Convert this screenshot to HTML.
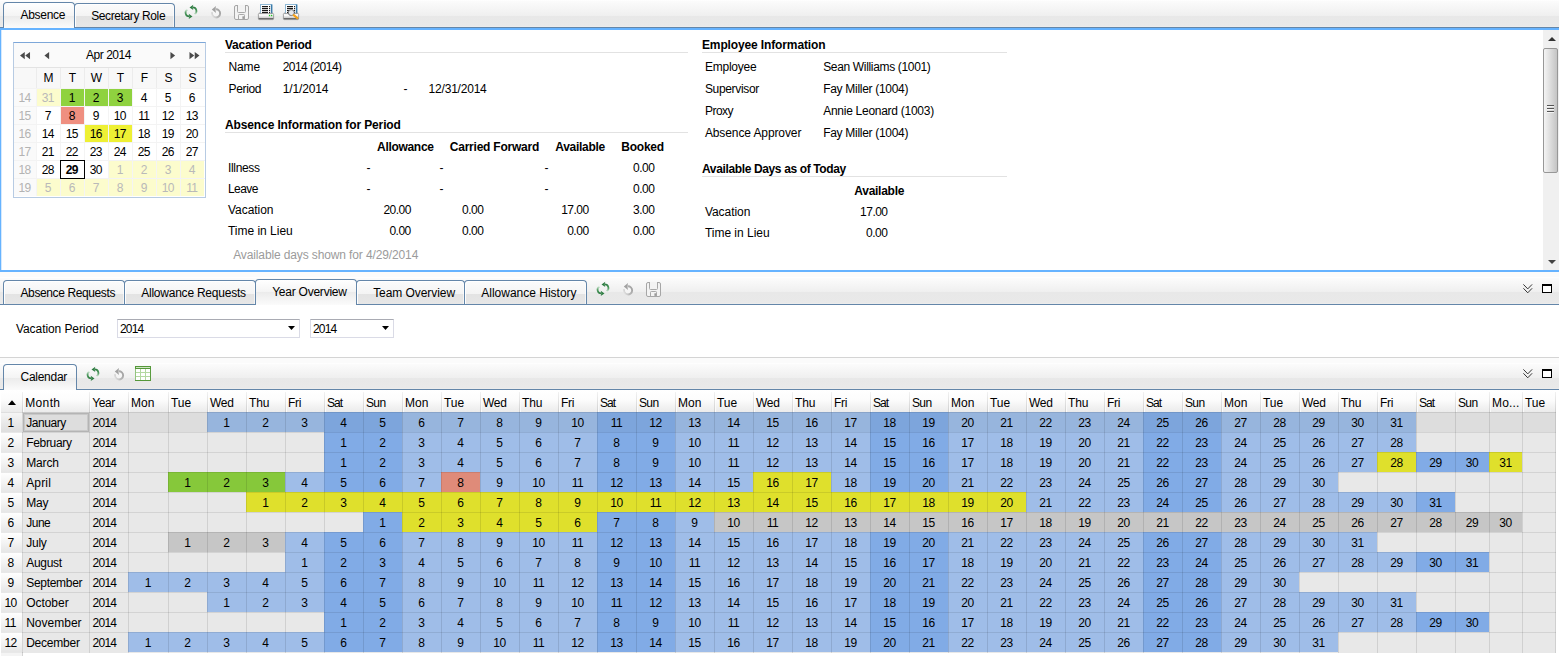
<!DOCTYPE html>
<html><head><meta charset="utf-8"><title>Absence</title>
<style>
html,body{margin:0;padding:0;}
body{width:1559px;height:656px;overflow:hidden;background:#fff;position:relative;font-family:"Liberation Sans",sans-serif;font-size:12px;color:#000;}
.b{position:absolute;box-sizing:content-box;}
.t{position:absolute;white-space:nowrap;line-height:14px;height:14px;}
svg{overflow:visible}
</style></head><body>

<div class="b" style="left:0px;top:-5px;width:1559px;height:32px;background:linear-gradient(to bottom,#fbfbfb 0,#fbfbfb 4.5px,#ffffff 5px,#fbfbfb 6.5px,#efefef 21px,#e8e8e8 21px,#e9e9e9 31px,#efefef 32px);"></div>
<div class="b" style="left:0px;top:27px;width:1559px;height:1px;background:#6486a9;"></div>
<div class="b" style="left:3px;top:2px;width:70px;height:25px;border:1px solid #6486a9;border-bottom:none;border-radius:4px 4px 0 0;background:linear-gradient(to bottom,#ffffff 0,#f4f4f4 13px,#ebebeb 13px,#fbfbfb 25px);z-index:2;"></div>
<span class="t" style="left:20.50px;top:8px;letter-spacing:-0.285px;z-index:3;">Absence</span>
<div class="b" style="left:74px;top:3px;width:99px;height:23px;border:1px solid #6486a9;border-bottom:none;border-radius:4px 4px 0 0;background:linear-gradient(to bottom,#fbfbfb 0,#f4f4f4 12px,#e3e3e3 12px,#e7e7e7 23px);box-shadow:inset 1px 1px 0 rgba(255,255,255,.95), inset -1px 0 0 rgba(255,255,255,.6);z-index:1;"></div>
<span class="t" style="left:91.20px;top:9px;letter-spacing:-0.383px;z-index:3;">Secretary Role</span>
<svg class="b" style="left:185px;top:5px" width="12" height="14" viewBox="0 0 12 14">
<defs><linearGradient id="ru1" x1="0" y1="2" x2="0" y2="9.5" gradientUnits="userSpaceOnUse"><stop offset="0" stop-color="#2f7d43"/><stop offset="0.55" stop-color="#4f9a5f"/><stop offset="1" stop-color="#d4ead8"/></linearGradient>
<linearGradient id="rl1" x1="0" y1="12" x2="0" y2="4.5" gradientUnits="userSpaceOnUse"><stop offset="0" stop-color="#2f7d43"/><stop offset="0.55" stop-color="#4f9a5f"/><stop offset="1" stop-color="#d4ead8"/></linearGradient></defs>
<path d="M7.6 2.4 A3.7 3.7 0 0 1 9.6 9.3" fill="none" stroke="url(#ru1)" stroke-width="1.7"/>
<path d="M4.5 2.4 L8.3 -0.2 L7.6 2.4 L8.3 5 Z" fill="#2f7d43"/>
<path d="M4.4 11.4 A3.7 3.7 0 0 1 2.4 4.5" fill="none" stroke="url(#rl1)" stroke-width="1.7"/>
<path d="M7.5 11.4 L3.7 8.8 L4.4 11.4 L3.7 14 Z" fill="#2f7d43"/>
</svg>
<svg class="b" style="left:211px;top:5.6px" width="11" height="13" viewBox="0 0 11 13">
<defs><linearGradient id="un2" x1="9.5" y1="5" x2="0.5" y2="9.5" gradientUnits="userSpaceOnUse"><stop offset="0" stop-color="#a0a0a0"/><stop offset="0.55" stop-color="#b8b8b8"/><stop offset="1" stop-color="#e4e4e4"/></linearGradient></defs>
<circle cx="5" cy="7.4" r="3.2" fill="#f6f6f6" opacity="0.8"/>
<path d="M4.6 3.3 A4.1 4.1 0 1 1 1.1 6.2" fill="none" stroke="url(#un2)" stroke-width="1.9"/>
<path d="M0.8 3.4 L5 0 L4.4 3.4 L5 7 Z" fill="#a2a2a2"/>
</svg>
<svg class="b" style="left:234px;top:5px" width="15" height="15" viewBox="0 0 15 15">
<rect x="0.5" y="0.5" width="14" height="14" rx="1.5" fill="#f3f3f3" stroke="#a6a6a6"/>
<rect x="4" y="0" width="7" height="1" fill="#f3f3f3"/>
<path d="M3.5 0.5 V6.5 Q3.5 7.5 4.5 7.5 H10.5 Q11.5 7.5 11.5 6.5 V0.5" fill="none" stroke="#a8a8a8"/>
<path d="M4.5 14.5 V10.3 Q4.5 9.5 5.3 9.5 H9.7 Q10.5 9.5 10.5 10.3 V14.5" fill="none" stroke="#a8a8a8"/>
<rect x="8.4" y="11.3" width="1.8" height="2.6" fill="#999"/>
</svg>
<svg class="b" style="left:258px;top:3.8px" width="16" height="16" viewBox="0 0 16 16">
<defs><linearGradient id="pb3" x1="0" y1="8.5" x2="0" y2="16" gradientUnits="userSpaceOnUse"><stop offset="0" stop-color="#d0d0d0"/><stop offset="0.22" stop-color="#ffffff"/><stop offset="0.5" stop-color="#f4f4f4"/><stop offset="0.62" stop-color="#bcbcbc"/><stop offset="0.69" stop-color="#e2e2e2"/><stop offset="0.75" stop-color="#6a6a6a"/><stop offset="1" stop-color="#707070"/></linearGradient></defs>
<rect x="2" y="0" width="12.3" height="10" fill="#8fb9d6"/>
<rect x="12.6" y="0.6" width="1.7" height="9.4" fill="#3b7aa8"/>
<rect x="3" y="1" width="9.8" height="9" fill="#ffffff"/>
<g fill="#000"><rect x="4" y="2.1" width="6" height="1.1"/><rect x="4" y="4.1" width="6" height="1.1"/><rect x="4" y="6.1" width="6" height="1.1"/><rect x="4" y="8.1" width="6" height="1.1"/>
<rect x="11" y="2.1" width="1.1" height="1.1"/><rect x="11" y="4.1" width="1.1" height="1.1"/><rect x="11" y="6.1" width="1.1" height="1.1"/><rect x="11" y="8.1" width="1.1" height="1.1"/></g>
<path d="M1.7 8.7 L0.4 10.2 V14.6 Q0.4 15.6 1.4 15.6 H14.6 Q15.6 15.6 15.6 14.6 V10.2 L14.3 8.7 L14.3 9.6 H1.7 Z" fill="url(#pb3)" stroke="#8e8e8e" stroke-width="0.8"/>
<rect x="10.9" y="10.8" width="1.3" height="1.4" fill="#25c425"/><rect x="13" y="10.8" width="1.3" height="1.4" fill="#25c425"/></svg>
<svg class="b" style="left:283px;top:3.8px" width="16" height="16" viewBox="0 0 16 16">
<defs><linearGradient id="pb4" x1="0" y1="8.5" x2="0" y2="16" gradientUnits="userSpaceOnUse"><stop offset="0" stop-color="#d0d0d0"/><stop offset="0.22" stop-color="#ffffff"/><stop offset="0.5" stop-color="#f4f4f4"/><stop offset="0.62" stop-color="#bcbcbc"/><stop offset="0.69" stop-color="#e2e2e2"/><stop offset="0.75" stop-color="#6a6a6a"/><stop offset="1" stop-color="#707070"/></linearGradient></defs>
<rect x="2" y="0" width="12.3" height="10" fill="#8fb9d6"/>
<rect x="12.6" y="0.6" width="1.7" height="9.4" fill="#3b7aa8"/>
<rect x="3" y="1" width="9.8" height="9" fill="#ffffff"/>
<g fill="#000"><rect x="4" y="2.1" width="6" height="1.1"/><rect x="4" y="4.1" width="6" height="1.1"/><rect x="4" y="6.1" width="6" height="1.1"/><rect x="4" y="8.1" width="6" height="1.1"/>
<rect x="11" y="2.1" width="1.1" height="1.1"/><rect x="11" y="4.1" width="1.1" height="1.1"/><rect x="11" y="6.1" width="1.1" height="1.1"/><rect x="11" y="8.1" width="1.1" height="1.1"/></g>
<path d="M1.7 8.7 L0.4 10.2 V14.6 Q0.4 15.6 1.4 15.6 H14.6 Q15.6 15.6 15.6 14.6 V10.2 L14.3 8.7 L14.3 9.6 H1.7 Z" fill="url(#pb4)" stroke="#8e8e8e" stroke-width="0.8"/>
<circle cx="8.3" cy="8.6" r="3" fill="#e6e9ec" stroke="#6a6a6a" stroke-width="0.9"/>
<path d="M10.8 11.2 L14.4 14.2" stroke="#f5a21a" stroke-width="2.2" stroke-linecap="round"/></svg>
<div class="b" style="left:0px;top:28px;width:1559px;height:2px;background:#66b3ff;"></div>
<div class="b" style="left:0px;top:28px;width:1px;height:243px;background:#66b3ff;"></div>
<div class="b" style="left:1px;top:30px;width:1px;height:240px;background:#d6e9fc;"></div>
<div class="b" style="left:0px;top:270px;width:1559px;height:2px;background:#66b3ff;"></div>
<div class="b" style="left:1543px;top:30px;width:16px;height:240px;background:#f0f0f0;"></div>
<svg class="b" style="left:1547.5px;top:37px" width="8" height="4" viewBox="0 0 8 4"><path d="M0 4 L4 0 L8 4 Z" fill="#333"/></svg>
<svg class="b" style="left:1547.5px;top:260px" width="8" height="4" viewBox="0 0 8 4"><path d="M0 0 L8 0 L4 4 Z" fill="#444"/></svg>
<div class="b" style="left:1543px;top:48px;width:13px;height:123px;border:1px solid #979797;border-radius:2px;background:linear-gradient(to right,#f4f4f4 0,#dcdcdc 50%,#c4c4c4 100%);"></div>
<div class="b" style="left:1547px;top:105px;width:7px;height:1px;background:#555;"></div>
<div class="b" style="left:1547px;top:106px;width:7px;height:1px;background:#fff;opacity:.7;"></div>
<div class="b" style="left:1547px;top:108px;width:7px;height:1px;background:#555;"></div>
<div class="b" style="left:1547px;top:109px;width:7px;height:1px;background:#fff;opacity:.7;"></div>
<div class="b" style="left:1547px;top:111px;width:7px;height:1px;background:#555;"></div>
<div class="b" style="left:1547px;top:112px;width:7px;height:1px;background:#fff;opacity:.7;"></div>
<div class="b" style="left:13px;top:42px;width:191px;height:154px;border:1px solid #b7cbe3;border-top-color:#7da7d9;background:#fff;"></div>
<div class="b" style="left:14px;top:43px;width:191px;height:24px;background:#fafafa;"></div>
<div class="b" style="left:14px;top:67px;width:191px;height:1px;background:#e3e3e3;"></div>
<div class="b" style="left:14px;top:68px;width:191px;height:20px;background:#f8f8f8;"></div>
<svg class="b" style="left:20px;top:51.6px" width="10.5" height="7.2" viewBox="0 0 11 8" preserveAspectRatio="none"><path d="M5 0 V8 L0 4 Z M10.5 0 V8 L5.5 4 Z" fill="#4a4a4a"/></svg>
<svg class="b" style="left:44px;top:51.6px" width="5.6" height="7.2" viewBox="0 0 6 8" preserveAspectRatio="none"><path d="M5.5 0 V8 L0.5 4 Z" fill="#4a4a4a"/></svg>
<svg class="b" style="left:170px;top:51.6px" width="5.6" height="7.2" viewBox="0 0 6 8" preserveAspectRatio="none"><path d="M0.5 0 V8 L5.5 4 Z" fill="#4a4a4a"/></svg>
<svg class="b" style="left:189px;top:51.6px" width="10.5" height="7.2" viewBox="0 0 11 8" preserveAspectRatio="none"><path d="M0.5 0 V8 L5.5 4 Z M6 0 V8 L11 4 Z" fill="#4a4a4a"/></svg>
<span class="t" style="left:86.00px;top:48px;letter-spacing:-0.463px;">Apr 2014</span>
<span class="t" style="left:43.50px;top:71px;letter-spacing:0.000px;">M</span>
<div class="b" style="left:36px;top:68px;width:1px;height:20px;background:#ececec;"></div>
<span class="t" style="left:68.84px;top:71px;letter-spacing:0.000px;">T</span>
<div class="b" style="left:60px;top:68px;width:1px;height:20px;background:#ececec;"></div>
<span class="t" style="left:90.84px;top:71px;letter-spacing:0.000px;">W</span>
<div class="b" style="left:84px;top:68px;width:1px;height:20px;background:#ececec;"></div>
<span class="t" style="left:116.84px;top:71px;letter-spacing:0.000px;">T</span>
<div class="b" style="left:108px;top:68px;width:1px;height:20px;background:#ececec;"></div>
<span class="t" style="left:140.84px;top:71px;letter-spacing:0.000px;">F</span>
<div class="b" style="left:132px;top:68px;width:1px;height:20px;background:#ececec;"></div>
<span class="t" style="left:164.50px;top:71px;letter-spacing:0.000px;">S</span>
<div class="b" style="left:156px;top:68px;width:1px;height:20px;background:#ececec;"></div>
<span class="t" style="left:188.50px;top:71px;letter-spacing:0.000px;">S</span>
<div class="b" style="left:180px;top:68px;width:1px;height:20px;background:#ececec;"></div>
<div class="b" style="left:14px;top:88px;width:191px;height:1px;background:#f3f3f3;"></div>
<div class="b" style="left:14px;top:89px;width:22px;height:17px;background:#fafafa;"></div>
<span class="t" style="left:18.53px;top:91px;letter-spacing:-0.600px;color:#b3b3b3;">14</span>
<div class="b" style="left:36px;top:89px;width:1px;height:17px;background:#f4f4f4;"></div>
<div class="b" style="left:37px;top:89px;width:23px;height:17px;background:#fcfccd;"></div>
<span class="t" style="left:41.73px;top:91px;letter-spacing:-0.600px;color:#b9b9b9;">31</span>
<div class="b" style="left:60px;top:89px;width:1px;height:17px;background:#f4f4f4;"></div>
<div class="b" style="left:61px;top:89px;width:23px;height:17px;background:#8fd23f;"></div>
<span class="t" style="left:68.76px;top:91px;letter-spacing:-0.600px;">1</span>
<div class="b" style="left:84px;top:89px;width:1px;height:17px;background:#f4f4f4;"></div>
<div class="b" style="left:85px;top:89px;width:23px;height:17px;background:#8fd23f;"></div>
<span class="t" style="left:92.76px;top:91px;letter-spacing:-0.600px;">2</span>
<div class="b" style="left:108px;top:89px;width:1px;height:17px;background:#f4f4f4;"></div>
<div class="b" style="left:109px;top:89px;width:23px;height:17px;background:#8fd23f;"></div>
<span class="t" style="left:116.76px;top:91px;letter-spacing:-0.600px;">3</span>
<div class="b" style="left:132px;top:89px;width:1px;height:17px;background:#f4f4f4;"></div>
<span class="t" style="left:140.76px;top:91px;letter-spacing:-0.600px;">4</span>
<div class="b" style="left:156px;top:89px;width:1px;height:17px;background:#f4f4f4;"></div>
<span class="t" style="left:164.76px;top:91px;letter-spacing:-0.600px;">5</span>
<div class="b" style="left:180px;top:89px;width:1px;height:17px;background:#f4f4f4;"></div>
<span class="t" style="left:188.76px;top:91px;letter-spacing:-0.600px;">6</span>
<div class="b" style="left:14px;top:106px;width:191px;height:1px;background:#f3f3f3;"></div>
<div class="b" style="left:14px;top:107px;width:22px;height:17px;background:#fafafa;"></div>
<span class="t" style="left:18.53px;top:109px;letter-spacing:-0.600px;color:#b3b3b3;">15</span>
<div class="b" style="left:36px;top:107px;width:1px;height:17px;background:#f4f4f4;"></div>
<span class="t" style="left:44.76px;top:109px;letter-spacing:-0.600px;">7</span>
<div class="b" style="left:60px;top:107px;width:1px;height:17px;background:#f4f4f4;"></div>
<div class="b" style="left:61px;top:107px;width:23px;height:17px;background:#ef8f80;"></div>
<span class="t" style="left:68.76px;top:109px;letter-spacing:-0.600px;">8</span>
<div class="b" style="left:84px;top:107px;width:1px;height:17px;background:#f4f4f4;"></div>
<span class="t" style="left:92.76px;top:109px;letter-spacing:-0.600px;">9</span>
<div class="b" style="left:108px;top:107px;width:1px;height:17px;background:#f4f4f4;"></div>
<span class="t" style="left:113.73px;top:109px;letter-spacing:-0.600px;">10</span>
<div class="b" style="left:132px;top:107px;width:1px;height:17px;background:#f4f4f4;"></div>
<span class="t" style="left:138.17px;top:109px;letter-spacing:-0.600px;">11</span>
<div class="b" style="left:156px;top:107px;width:1px;height:17px;background:#f4f4f4;"></div>
<span class="t" style="left:161.73px;top:109px;letter-spacing:-0.600px;">12</span>
<div class="b" style="left:180px;top:107px;width:1px;height:17px;background:#f4f4f4;"></div>
<span class="t" style="left:185.73px;top:109px;letter-spacing:-0.600px;">13</span>
<div class="b" style="left:14px;top:124px;width:191px;height:1px;background:#f3f3f3;"></div>
<div class="b" style="left:14px;top:125px;width:22px;height:17px;background:#fafafa;"></div>
<span class="t" style="left:18.53px;top:127px;letter-spacing:-0.600px;color:#b3b3b3;">16</span>
<div class="b" style="left:36px;top:125px;width:1px;height:17px;background:#f4f4f4;"></div>
<span class="t" style="left:41.73px;top:127px;letter-spacing:-0.600px;">14</span>
<div class="b" style="left:60px;top:125px;width:1px;height:17px;background:#f4f4f4;"></div>
<span class="t" style="left:65.73px;top:127px;letter-spacing:-0.600px;">15</span>
<div class="b" style="left:84px;top:125px;width:1px;height:17px;background:#f4f4f4;"></div>
<div class="b" style="left:85px;top:125px;width:23px;height:17px;background:#eef034;"></div>
<span class="t" style="left:89.73px;top:127px;letter-spacing:-0.600px;">16</span>
<div class="b" style="left:108px;top:125px;width:1px;height:17px;background:#f4f4f4;"></div>
<div class="b" style="left:109px;top:125px;width:23px;height:17px;background:#eef034;"></div>
<span class="t" style="left:113.73px;top:127px;letter-spacing:-0.600px;">17</span>
<div class="b" style="left:132px;top:125px;width:1px;height:17px;background:#f4f4f4;"></div>
<span class="t" style="left:137.73px;top:127px;letter-spacing:-0.600px;">18</span>
<div class="b" style="left:156px;top:125px;width:1px;height:17px;background:#f4f4f4;"></div>
<span class="t" style="left:161.73px;top:127px;letter-spacing:-0.600px;">19</span>
<div class="b" style="left:180px;top:125px;width:1px;height:17px;background:#f4f4f4;"></div>
<span class="t" style="left:185.73px;top:127px;letter-spacing:-0.600px;">20</span>
<div class="b" style="left:14px;top:142px;width:191px;height:1px;background:#f3f3f3;"></div>
<div class="b" style="left:14px;top:143px;width:22px;height:17px;background:#fafafa;"></div>
<span class="t" style="left:18.53px;top:145px;letter-spacing:-0.600px;color:#b3b3b3;">17</span>
<div class="b" style="left:36px;top:143px;width:1px;height:17px;background:#f4f4f4;"></div>
<span class="t" style="left:41.73px;top:145px;letter-spacing:-0.600px;">21</span>
<div class="b" style="left:60px;top:143px;width:1px;height:17px;background:#f4f4f4;"></div>
<span class="t" style="left:65.73px;top:145px;letter-spacing:-0.600px;">22</span>
<div class="b" style="left:84px;top:143px;width:1px;height:17px;background:#f4f4f4;"></div>
<span class="t" style="left:89.73px;top:145px;letter-spacing:-0.600px;">23</span>
<div class="b" style="left:108px;top:143px;width:1px;height:17px;background:#f4f4f4;"></div>
<span class="t" style="left:113.73px;top:145px;letter-spacing:-0.600px;">24</span>
<div class="b" style="left:132px;top:143px;width:1px;height:17px;background:#f4f4f4;"></div>
<span class="t" style="left:137.73px;top:145px;letter-spacing:-0.600px;">25</span>
<div class="b" style="left:156px;top:143px;width:1px;height:17px;background:#f4f4f4;"></div>
<span class="t" style="left:161.73px;top:145px;letter-spacing:-0.600px;">26</span>
<div class="b" style="left:180px;top:143px;width:1px;height:17px;background:#f4f4f4;"></div>
<span class="t" style="left:185.73px;top:145px;letter-spacing:-0.600px;">27</span>
<div class="b" style="left:14px;top:160px;width:191px;height:1px;background:#f3f3f3;"></div>
<div class="b" style="left:14px;top:161px;width:22px;height:17px;background:#fafafa;"></div>
<span class="t" style="left:18.53px;top:163px;letter-spacing:-0.600px;color:#b3b3b3;">18</span>
<div class="b" style="left:36px;top:161px;width:1px;height:17px;background:#f4f4f4;"></div>
<span class="t" style="left:41.73px;top:163px;letter-spacing:-0.600px;">28</span>
<div class="b" style="left:60px;top:161px;width:1px;height:17px;background:#f4f4f4;"></div>
<div class="b" style="left:60px;top:160px;width:23px;height:17px;border:1px solid #000;background:#fff;z-index:4;"></div>
<span class="t" style="left:65.73px;top:163px;letter-spacing:-0.600px;font-weight:bold;z-index:5;">29</span>
<div class="b" style="left:84px;top:161px;width:1px;height:17px;background:#f4f4f4;"></div>
<span class="t" style="left:89.73px;top:163px;letter-spacing:-0.600px;">30</span>
<div class="b" style="left:108px;top:161px;width:1px;height:17px;background:#f4f4f4;"></div>
<div class="b" style="left:109px;top:161px;width:23px;height:17px;background:#fcfccd;"></div>
<span class="t" style="left:116.76px;top:163px;letter-spacing:-0.600px;color:#b9b9b9;">1</span>
<div class="b" style="left:132px;top:161px;width:1px;height:17px;background:#f4f4f4;"></div>
<div class="b" style="left:133px;top:161px;width:23px;height:17px;background:#fcfccd;"></div>
<span class="t" style="left:140.76px;top:163px;letter-spacing:-0.600px;color:#b9b9b9;">2</span>
<div class="b" style="left:156px;top:161px;width:1px;height:17px;background:#f4f4f4;"></div>
<div class="b" style="left:157px;top:161px;width:23px;height:17px;background:#fcfccd;"></div>
<span class="t" style="left:164.76px;top:163px;letter-spacing:-0.600px;color:#b9b9b9;">3</span>
<div class="b" style="left:180px;top:161px;width:1px;height:17px;background:#f4f4f4;"></div>
<div class="b" style="left:181px;top:161px;width:23px;height:17px;background:#fcfccd;"></div>
<span class="t" style="left:188.76px;top:163px;letter-spacing:-0.600px;color:#b9b9b9;">4</span>
<div class="b" style="left:14px;top:178px;width:191px;height:1px;background:#f3f3f3;"></div>
<div class="b" style="left:14px;top:179px;width:22px;height:17px;background:#fafafa;"></div>
<span class="t" style="left:18.53px;top:181px;letter-spacing:-0.600px;color:#b3b3b3;">19</span>
<div class="b" style="left:36px;top:179px;width:1px;height:17px;background:#f4f4f4;"></div>
<div class="b" style="left:37px;top:179px;width:23px;height:17px;background:#fcfccd;"></div>
<span class="t" style="left:44.76px;top:181px;letter-spacing:-0.600px;color:#b9b9b9;">5</span>
<div class="b" style="left:60px;top:179px;width:1px;height:17px;background:#f4f4f4;"></div>
<div class="b" style="left:61px;top:179px;width:23px;height:17px;background:#fcfccd;"></div>
<span class="t" style="left:68.76px;top:181px;letter-spacing:-0.600px;color:#b9b9b9;">6</span>
<div class="b" style="left:84px;top:179px;width:1px;height:17px;background:#f4f4f4;"></div>
<div class="b" style="left:85px;top:179px;width:23px;height:17px;background:#fcfccd;"></div>
<span class="t" style="left:92.76px;top:181px;letter-spacing:-0.600px;color:#b9b9b9;">7</span>
<div class="b" style="left:108px;top:179px;width:1px;height:17px;background:#f4f4f4;"></div>
<div class="b" style="left:109px;top:179px;width:23px;height:17px;background:#fcfccd;"></div>
<span class="t" style="left:116.76px;top:181px;letter-spacing:-0.600px;color:#b9b9b9;">8</span>
<div class="b" style="left:132px;top:179px;width:1px;height:17px;background:#f4f4f4;"></div>
<div class="b" style="left:133px;top:179px;width:23px;height:17px;background:#fcfccd;"></div>
<span class="t" style="left:140.76px;top:181px;letter-spacing:-0.600px;color:#b9b9b9;">9</span>
<div class="b" style="left:156px;top:179px;width:1px;height:17px;background:#f4f4f4;"></div>
<div class="b" style="left:157px;top:179px;width:23px;height:17px;background:#fcfccd;"></div>
<span class="t" style="left:161.73px;top:181px;letter-spacing:-0.600px;color:#b9b9b9;">10</span>
<div class="b" style="left:180px;top:179px;width:1px;height:17px;background:#f4f4f4;"></div>
<div class="b" style="left:181px;top:179px;width:23px;height:17px;background:#fcfccd;"></div>
<span class="t" style="left:186.17px;top:181px;letter-spacing:-0.600px;color:#b9b9b9;">11</span>
<span class="t" style="left:225.00px;top:38px;letter-spacing:-0.222px;font-weight:bold;">Vacation Period</span>
<div class="b" style="left:225px;top:52px;width:463px;height:1px;background:#e2e2e2;"></div>
<span class="t" style="left:228.50px;top:60px;letter-spacing:-0.152px;">Name</span>
<span class="t" style="left:282.70px;top:60px;letter-spacing:-0.538px;">2014 (2014)</span>
<span class="t" style="left:228.50px;top:82px;letter-spacing:-0.348px;">Period</span>
<span class="t" style="left:282.70px;top:82px;letter-spacing:-0.126px;">1/1/2014</span>
<span class="t" style="left:403.50px;top:82px;letter-spacing:0.000px;">-</span>
<span class="t" style="left:428.60px;top:82px;letter-spacing:-0.206px;">12/31/2014</span>
<span class="t" style="left:225.00px;top:118px;letter-spacing:-0.119px;font-weight:bold;">Absence Information for Period</span>
<div class="b" style="left:225px;top:132px;width:463px;height:1px;background:#e2e2e2;"></div>
<span class="t" style="left:377.10px;top:140px;letter-spacing:-0.316px;font-weight:bold;">Allowance</span>
<span class="t" style="left:449.80px;top:140px;letter-spacing:-0.233px;font-weight:bold;">Carried Forward</span>
<span class="t" style="left:555.30px;top:140px;letter-spacing:-0.294px;font-weight:bold;">Available</span>
<span class="t" style="left:621.30px;top:140px;letter-spacing:-0.234px;font-weight:bold;">Booked</span>
<span class="t" style="left:228.00px;top:161px;letter-spacing:-0.330px;">Illness</span>
<span class="t" style="left:366.60px;top:161px;letter-spacing:0.000px;">-</span>
<span class="t" style="left:439.50px;top:161px;letter-spacing:0.000px;">-</span>
<span class="t" style="left:544.60px;top:161px;letter-spacing:0.000px;">-</span>
<span class="t" style="left:633.00px;top:161px;letter-spacing:-0.489px;">0.00</span>
<span class="t" style="left:228.00px;top:182px;letter-spacing:-0.599px;">Leave</span>
<span class="t" style="left:366.60px;top:182px;letter-spacing:0.000px;">-</span>
<span class="t" style="left:439.50px;top:182px;letter-spacing:0.000px;">-</span>
<span class="t" style="left:544.60px;top:182px;letter-spacing:0.000px;">-</span>
<span class="t" style="left:633.00px;top:182px;letter-spacing:-0.489px;">0.00</span>
<span class="t" style="left:228.00px;top:203px;letter-spacing:-0.038px;">Vacation</span>
<span class="t" style="left:383.40px;top:203px;letter-spacing:-0.526px;">20.00</span>
<span class="t" style="left:462.10px;top:203px;letter-spacing:-0.489px;">0.00</span>
<span class="t" style="left:561.20px;top:203px;letter-spacing:-0.526px;">17.00</span>
<span class="t" style="left:633.00px;top:203px;letter-spacing:-0.489px;">3.00</span>
<span class="t" style="left:228.00px;top:224px;letter-spacing:-0.018px;">Time in Lieu</span>
<span class="t" style="left:389.40px;top:224px;letter-spacing:-0.489px;">0.00</span>
<span class="t" style="left:462.10px;top:224px;letter-spacing:-0.489px;">0.00</span>
<span class="t" style="left:567.20px;top:224px;letter-spacing:-0.489px;">0.00</span>
<span class="t" style="left:633.00px;top:224px;letter-spacing:-0.489px;">0.00</span>
<span class="t" style="left:233.20px;top:248px;letter-spacing:-0.125px;color:#9b9b9b;">Available days shown for 4/29/2014</span>
<span class="t" style="left:702.00px;top:38px;letter-spacing:-0.131px;font-weight:bold;">Employee Information</span>
<div class="b" style="left:702px;top:52px;width:305px;height:1px;background:#e2e2e2;"></div>
<span class="t" style="left:704.90px;top:60px;letter-spacing:-0.220px;">Employee</span>
<span class="t" style="left:823.20px;top:60px;letter-spacing:-0.337px;">Sean Williams (1001)</span>
<span class="t" style="left:704.90px;top:82px;letter-spacing:-0.326px;">Supervisor</span>
<span class="t" style="left:823.20px;top:82px;letter-spacing:-0.295px;">Fay Miller (1004)</span>
<span class="t" style="left:704.90px;top:104px;letter-spacing:-0.495px;">Proxy</span>
<span class="t" style="left:823.20px;top:104px;letter-spacing:-0.269px;">Annie Leonard (1003)</span>
<span class="t" style="left:704.90px;top:126px;letter-spacing:-0.104px;">Absence Approver</span>
<span class="t" style="left:823.20px;top:126px;letter-spacing:-0.295px;">Fay Miller (1004)</span>
<span class="t" style="left:702.00px;top:162px;letter-spacing:-0.365px;font-weight:bold;">Available Days as of Today</span>
<div class="b" style="left:702px;top:176px;width:305px;height:1px;background:#e2e2e2;"></div>
<span class="t" style="left:854.30px;top:184px;letter-spacing:-0.272px;font-weight:bold;">Available</span>
<span class="t" style="left:704.90px;top:205px;letter-spacing:-0.038px;">Vacation</span>
<span class="t" style="left:860.10px;top:205px;letter-spacing:-0.526px;">17.00</span>
<span class="t" style="left:704.90px;top:226px;letter-spacing:-0.018px;">Time in Lieu</span>
<span class="t" style="left:866.10px;top:226px;letter-spacing:-0.489px;">0.00</span>
<div class="b" style="left:0px;top:272px;width:1559px;height:32px;background:linear-gradient(to bottom,#fbfbfb 0,#fbfbfb 4.5px,#ffffff 5px,#fbfbfb 6.5px,#efefef 20px,#e8e8e8 20px,#e9e9e9 31px,#efefef 32px);"></div>
<div class="b" style="left:0px;top:304px;width:1559px;height:1px;background:#6486a9;"></div>
<div class="b" style="left:3px;top:280px;width:120px;height:23px;border:1px solid #6486a9;border-bottom:none;border-radius:4px 4px 0 0;background:linear-gradient(to bottom,#fbfbfb 0,#f4f4f4 13px,#e3e3e3 13px,#e7e7e7 23px);box-shadow:inset 1px 1px 0 rgba(255,255,255,.95), inset -1px 0 0 rgba(255,255,255,.6);z-index:1;"></div>
<span class="t" style="left:20.50px;top:286px;letter-spacing:-0.389px;z-index:3;">Absence Requests</span>
<div class="b" style="left:124px;top:280px;width:130px;height:23px;border:1px solid #6486a9;border-bottom:none;border-radius:4px 4px 0 0;background:linear-gradient(to bottom,#fbfbfb 0,#f4f4f4 13px,#e3e3e3 13px,#e7e7e7 23px);box-shadow:inset 1px 1px 0 rgba(255,255,255,.95), inset -1px 0 0 rgba(255,255,255,.6);z-index:1;"></div>
<span class="t" style="left:141.20px;top:286px;letter-spacing:-0.229px;z-index:3;">Allowance Requests</span>
<div class="b" style="left:255px;top:279px;width:100px;height:25px;border:1px solid #6486a9;border-bottom:none;border-radius:4px 4px 0 0;background:linear-gradient(to bottom,#ffffff 0,#f4f4f4 12px,#ebebeb 12px,#fbfbfb 25px);z-index:2;"></div>
<span class="t" style="left:272.20px;top:285px;letter-spacing:-0.238px;z-index:3;">Year Overview</span>
<div class="b" style="left:356px;top:280px;width:107px;height:23px;border:1px solid #6486a9;border-bottom:none;border-radius:4px 4px 0 0;background:linear-gradient(to bottom,#fbfbfb 0,#f4f4f4 13px,#e3e3e3 13px,#e7e7e7 23px);box-shadow:inset 1px 1px 0 rgba(255,255,255,.95), inset -1px 0 0 rgba(255,255,255,.6);z-index:1;"></div>
<span class="t" style="left:373.20px;top:286px;letter-spacing:-0.068px;z-index:3;">Team Overview</span>
<div class="b" style="left:464px;top:280px;width:121px;height:23px;border:1px solid #6486a9;border-bottom:none;border-radius:4px 4px 0 0;background:linear-gradient(to bottom,#fbfbfb 0,#f4f4f4 13px,#e3e3e3 13px,#e7e7e7 23px);box-shadow:inset 1px 1px 0 rgba(255,255,255,.95), inset -1px 0 0 rgba(255,255,255,.6);z-index:1;"></div>
<span class="t" style="left:481.30px;top:286px;letter-spacing:-0.004px;z-index:3;">Allowance History</span>
<svg class="b" style="left:597px;top:282px" width="12" height="14" viewBox="0 0 12 14">
<defs><linearGradient id="ru5" x1="0" y1="2" x2="0" y2="9.5" gradientUnits="userSpaceOnUse"><stop offset="0" stop-color="#2f7d43"/><stop offset="0.55" stop-color="#4f9a5f"/><stop offset="1" stop-color="#d4ead8"/></linearGradient>
<linearGradient id="rl5" x1="0" y1="12" x2="0" y2="4.5" gradientUnits="userSpaceOnUse"><stop offset="0" stop-color="#2f7d43"/><stop offset="0.55" stop-color="#4f9a5f"/><stop offset="1" stop-color="#d4ead8"/></linearGradient></defs>
<path d="M7.6 2.4 A3.7 3.7 0 0 1 9.6 9.3" fill="none" stroke="url(#ru5)" stroke-width="1.7"/>
<path d="M4.5 2.4 L8.3 -0.2 L7.6 2.4 L8.3 5 Z" fill="#2f7d43"/>
<path d="M4.4 11.4 A3.7 3.7 0 0 1 2.4 4.5" fill="none" stroke="url(#rl5)" stroke-width="1.7"/>
<path d="M7.5 11.4 L3.7 8.8 L4.4 11.4 L3.7 14 Z" fill="#2f7d43"/>
</svg>
<svg class="b" style="left:623px;top:282.6px" width="11" height="13" viewBox="0 0 11 13">
<defs><linearGradient id="un6" x1="9.5" y1="5" x2="0.5" y2="9.5" gradientUnits="userSpaceOnUse"><stop offset="0" stop-color="#a0a0a0"/><stop offset="0.55" stop-color="#b8b8b8"/><stop offset="1" stop-color="#e4e4e4"/></linearGradient></defs>
<circle cx="5" cy="7.4" r="3.2" fill="#f6f6f6" opacity="0.8"/>
<path d="M4.6 3.3 A4.1 4.1 0 1 1 1.1 6.2" fill="none" stroke="url(#un6)" stroke-width="1.9"/>
<path d="M0.8 3.4 L5 0 L4.4 3.4 L5 7 Z" fill="#a2a2a2"/>
</svg>
<svg class="b" style="left:646px;top:282px" width="15" height="15" viewBox="0 0 15 15">
<rect x="0.5" y="0.5" width="14" height="14" rx="1.5" fill="#f3f3f3" stroke="#a6a6a6"/>
<rect x="4" y="0" width="7" height="1" fill="#f3f3f3"/>
<path d="M3.5 0.5 V6.5 Q3.5 7.5 4.5 7.5 H10.5 Q11.5 7.5 11.5 6.5 V0.5" fill="none" stroke="#a8a8a8"/>
<path d="M4.5 14.5 V10.3 Q4.5 9.5 5.3 9.5 H9.7 Q10.5 9.5 10.5 10.3 V14.5" fill="none" stroke="#a8a8a8"/>
<rect x="8.4" y="11.3" width="1.8" height="2.6" fill="#999"/>
</svg>
<svg class="b" style="left:1523px;top:284px" width="10" height="10" viewBox="0 0 10 10">
<path d="M0.4 0.4 L4.75 4.9 L9.1 0.4 M0.4 4.3 L4.75 8.8 L9.1 4.3" fill="none" stroke="#2a2a2a" stroke-width="0.95"/></svg>
<div class="b" style="left:1542px;top:284px;width:8px;height:6px;border:1px solid #000;border-top-width:2px;background:#fff"></div>
<span class="t" style="left:16.00px;top:322px;letter-spacing:-0.082px;">Vacation Period</span>
<div class="b" style="left:117px;top:319px;width:181px;height:17px;border:1px solid #dadbe6;border-top-color:#a9abb3;background:#fff;"></div>
<span class="t" style="left:120.00px;top:322px;letter-spacing:-0.848px;">2014</span>
<svg class="b" style="left:288px;top:326px" width="7" height="4" viewBox="0 0 7 4"><path d="M0 0 H7 L3.5 4 Z" fill="#000"/></svg>
<div class="b" style="left:310px;top:319px;width:82px;height:17px;border:1px solid #dadbe6;border-top-color:#a9abb3;background:#fff;"></div>
<span class="t" style="left:313.00px;top:322px;letter-spacing:-0.848px;">2014</span>
<svg class="b" style="left:382px;top:326px" width="7" height="4" viewBox="0 0 7 4"><path d="M0 0 H7 L3.5 4 Z" fill="#000"/></svg>
<div class="b" style="left:0px;top:357px;width:1559px;height:1px;background:#d4d4d4;"></div>
<div class="b" style="left:0px;top:358px;width:1559px;height:31px;background:linear-gradient(to bottom,#fbfbfb 0,#fbfbfb 4.5px,#ffffff 5px,#fbfbfb 6.5px,#efefef 20px,#e8e8e8 20px,#e9e9e9 30px,#efefef 31px);"></div>
<div class="b" style="left:0px;top:389px;width:1559px;height:1px;background:#6486a9;"></div>
<div class="b" style="left:3px;top:364px;width:72px;height:25px;border:1px solid #6486a9;border-bottom:none;border-radius:4px 4px 0 0;background:linear-gradient(to bottom,#ffffff 0,#f4f4f4 13px,#ebebeb 13px,#fbfbfb 25px);z-index:2;"></div>
<span class="t" style="left:20.50px;top:370px;letter-spacing:-0.274px;z-index:3;">Calendar</span>
<svg class="b" style="left:87px;top:367px" width="12" height="14" viewBox="0 0 12 14">
<defs><linearGradient id="ru7" x1="0" y1="2" x2="0" y2="9.5" gradientUnits="userSpaceOnUse"><stop offset="0" stop-color="#2f7d43"/><stop offset="0.55" stop-color="#4f9a5f"/><stop offset="1" stop-color="#d4ead8"/></linearGradient>
<linearGradient id="rl7" x1="0" y1="12" x2="0" y2="4.5" gradientUnits="userSpaceOnUse"><stop offset="0" stop-color="#2f7d43"/><stop offset="0.55" stop-color="#4f9a5f"/><stop offset="1" stop-color="#d4ead8"/></linearGradient></defs>
<path d="M7.6 2.4 A3.7 3.7 0 0 1 9.6 9.3" fill="none" stroke="url(#ru7)" stroke-width="1.7"/>
<path d="M4.5 2.4 L8.3 -0.2 L7.6 2.4 L8.3 5 Z" fill="#2f7d43"/>
<path d="M4.4 11.4 A3.7 3.7 0 0 1 2.4 4.5" fill="none" stroke="url(#rl7)" stroke-width="1.7"/>
<path d="M7.5 11.4 L3.7 8.8 L4.4 11.4 L3.7 14 Z" fill="#2f7d43"/>
</svg>
<svg class="b" style="left:113.5px;top:367.6px" width="11" height="13" viewBox="0 0 11 13">
<defs><linearGradient id="un8" x1="9.5" y1="5" x2="0.5" y2="9.5" gradientUnits="userSpaceOnUse"><stop offset="0" stop-color="#a0a0a0"/><stop offset="0.55" stop-color="#b8b8b8"/><stop offset="1" stop-color="#e4e4e4"/></linearGradient></defs>
<circle cx="5" cy="7.4" r="3.2" fill="#f6f6f6" opacity="0.8"/>
<path d="M4.6 3.3 A4.1 4.1 0 1 1 1.1 6.2" fill="none" stroke="url(#un8)" stroke-width="1.9"/>
<path d="M0.8 3.4 L5 0 L4.4 3.4 L5 7 Z" fill="#a2a2a2"/>
</svg>
<svg class="b" style="left:135px;top:366px" width="16" height="15" viewBox="0 0 16 15" shape-rendering="crispEdges">
<rect x="0" y="0" width="16" height="15" fill="#b4d8a2"/>
<rect x="0" y="0" width="16" height="3" fill="#55983a"/>
<rect x="1" y="1" width="14" height="1" fill="#cfe6c4"/>
<rect x="0" y="3" width="1" height="11" fill="#93c47f"/>
<rect x="15" y="3" width="1" height="12" fill="#5a9c40"/>
<rect x="0" y="14" width="16" height="1" fill="#55983a"/>
<rect x="1" y="3" width="4" height="3" fill="#fff"/><rect x="1" y="7" width="4" height="3" fill="#fff"/><rect x="1" y="11" width="4" height="3" fill="#fff"/><rect x="6" y="3" width="4" height="3" fill="#fff"/><rect x="6" y="7" width="4" height="3" fill="#fff"/><rect x="6" y="11" width="4" height="3" fill="#fff"/><rect x="11" y="3" width="4" height="3" fill="#fff"/><rect x="11" y="7" width="4" height="3" fill="#fff"/><rect x="11" y="11" width="4" height="3" fill="#fff"/>
</svg>
<svg class="b" style="left:1523px;top:369px" width="10" height="10" viewBox="0 0 10 10">
<path d="M0.4 0.4 L4.75 4.9 L9.1 0.4 M0.4 4.3 L4.75 8.8 L9.1 4.3" fill="none" stroke="#2a2a2a" stroke-width="0.95"/></svg>
<div class="b" style="left:1542px;top:369px;width:8px;height:6px;border:1px solid #000;border-top-width:2px;background:#fff"></div>
<div class="b" style="left:1px;top:390px;width:1555px;height:22px;background:linear-gradient(to bottom,#ffffff 0,#fcfcfc 45%,#ebebeb 100%);"></div>
<svg class="b" style="left:8px;top:400px" width="8" height="5" viewBox="0 0 8 5"><path d="M0 5 L4 0.3 L8 5 Z" fill="#000"/></svg>
<span class="t" style="left:25.20px;top:396px;letter-spacing:0.370px;">Month</span>
<span class="t" style="left:92.20px;top:396px;letter-spacing:-0.362px;">Year</span>
<span class="t" style="left:131.00px;top:396px;letter-spacing:-0.015px;">Mon</span>
<span class="t" style="left:171.00px;top:396px;letter-spacing:-0.077px;">Tue</span>
<span class="t" style="left:210.00px;top:396px;letter-spacing:-0.285px;">Wed</span>
<span class="t" style="left:249.00px;top:396px;letter-spacing:-0.159px;">Thu</span>
<span class="t" style="left:288.00px;top:396px;letter-spacing:-0.331px;">Fri</span>
<span class="t" style="left:327.00px;top:396px;letter-spacing:-1.004px;">Sat</span>
<span class="t" style="left:366.00px;top:396px;letter-spacing:-0.651px;">Sun</span>
<span class="t" style="left:405.00px;top:396px;letter-spacing:-0.015px;">Mon</span>
<span class="t" style="left:444.00px;top:396px;letter-spacing:-0.077px;">Tue</span>
<span class="t" style="left:483.00px;top:396px;letter-spacing:-0.285px;">Wed</span>
<span class="t" style="left:522.00px;top:396px;letter-spacing:-0.159px;">Thu</span>
<span class="t" style="left:561.00px;top:396px;letter-spacing:-0.331px;">Fri</span>
<span class="t" style="left:600.00px;top:396px;letter-spacing:-1.004px;">Sat</span>
<span class="t" style="left:639.00px;top:396px;letter-spacing:-0.651px;">Sun</span>
<span class="t" style="left:678.00px;top:396px;letter-spacing:-0.015px;">Mon</span>
<span class="t" style="left:717.00px;top:396px;letter-spacing:-0.077px;">Tue</span>
<span class="t" style="left:756.00px;top:396px;letter-spacing:-0.285px;">Wed</span>
<span class="t" style="left:795.00px;top:396px;letter-spacing:-0.159px;">Thu</span>
<span class="t" style="left:834.00px;top:396px;letter-spacing:-0.331px;">Fri</span>
<span class="t" style="left:873.00px;top:396px;letter-spacing:-1.004px;">Sat</span>
<span class="t" style="left:912.00px;top:396px;letter-spacing:-0.651px;">Sun</span>
<span class="t" style="left:951.00px;top:396px;letter-spacing:-0.015px;">Mon</span>
<span class="t" style="left:990.00px;top:396px;letter-spacing:-0.077px;">Tue</span>
<span class="t" style="left:1029.00px;top:396px;letter-spacing:-0.285px;">Wed</span>
<span class="t" style="left:1068.00px;top:396px;letter-spacing:-0.159px;">Thu</span>
<span class="t" style="left:1107.00px;top:396px;letter-spacing:-0.331px;">Fri</span>
<span class="t" style="left:1146.00px;top:396px;letter-spacing:-1.004px;">Sat</span>
<span class="t" style="left:1185.00px;top:396px;letter-spacing:-0.651px;">Sun</span>
<span class="t" style="left:1224.00px;top:396px;letter-spacing:-0.015px;">Mon</span>
<span class="t" style="left:1263.00px;top:396px;letter-spacing:-0.077px;">Tue</span>
<span class="t" style="left:1302.00px;top:396px;letter-spacing:-0.285px;">Wed</span>
<span class="t" style="left:1341.00px;top:396px;letter-spacing:-0.159px;">Thu</span>
<span class="t" style="left:1380.00px;top:396px;letter-spacing:-0.331px;">Fri</span>
<span class="t" style="left:1419.00px;top:396px;letter-spacing:-1.004px;">Sat</span>
<span class="t" style="left:1458.00px;top:396px;letter-spacing:-0.651px;">Sun</span>
<span class="t" style="left:1492.00px;top:396px;letter-spacing:0.145px;">Mo...</span>
<span class="t" style="left:1525.00px;top:396px;letter-spacing:-0.077px;">Tue</span>
<div class="b" style="left:22px;top:392px;width:1px;height:20px;background:linear-gradient(to bottom,#f2f2f2,#cfcfcf);"></div>
<div class="b" style="left:23px;top:392px;width:1px;height:20px;background:linear-gradient(to bottom,rgba(255,255,255,0),rgba(255,255,255,.8));"></div>
<div class="b" style="left:89px;top:392px;width:1px;height:20px;background:linear-gradient(to bottom,#f2f2f2,#cfcfcf);"></div>
<div class="b" style="left:90px;top:392px;width:1px;height:20px;background:linear-gradient(to bottom,rgba(255,255,255,0),rgba(255,255,255,.8));"></div>
<div class="b" style="left:128px;top:392px;width:1px;height:20px;background:linear-gradient(to bottom,#f2f2f2,#cfcfcf);"></div>
<div class="b" style="left:129px;top:392px;width:1px;height:20px;background:linear-gradient(to bottom,rgba(255,255,255,0),rgba(255,255,255,.8));"></div>
<div class="b" style="left:168px;top:392px;width:1px;height:20px;background:linear-gradient(to bottom,#f2f2f2,#cfcfcf);"></div>
<div class="b" style="left:169px;top:392px;width:1px;height:20px;background:linear-gradient(to bottom,rgba(255,255,255,0),rgba(255,255,255,.8));"></div>
<div class="b" style="left:207px;top:392px;width:1px;height:20px;background:linear-gradient(to bottom,#f2f2f2,#cfcfcf);"></div>
<div class="b" style="left:208px;top:392px;width:1px;height:20px;background:linear-gradient(to bottom,rgba(255,255,255,0),rgba(255,255,255,.8));"></div>
<div class="b" style="left:246px;top:392px;width:1px;height:20px;background:linear-gradient(to bottom,#f2f2f2,#cfcfcf);"></div>
<div class="b" style="left:247px;top:392px;width:1px;height:20px;background:linear-gradient(to bottom,rgba(255,255,255,0),rgba(255,255,255,.8));"></div>
<div class="b" style="left:285px;top:392px;width:1px;height:20px;background:linear-gradient(to bottom,#f2f2f2,#cfcfcf);"></div>
<div class="b" style="left:286px;top:392px;width:1px;height:20px;background:linear-gradient(to bottom,rgba(255,255,255,0),rgba(255,255,255,.8));"></div>
<div class="b" style="left:324px;top:392px;width:1px;height:20px;background:linear-gradient(to bottom,#f2f2f2,#cfcfcf);"></div>
<div class="b" style="left:325px;top:392px;width:1px;height:20px;background:linear-gradient(to bottom,rgba(255,255,255,0),rgba(255,255,255,.8));"></div>
<div class="b" style="left:363px;top:392px;width:1px;height:20px;background:linear-gradient(to bottom,#f2f2f2,#cfcfcf);"></div>
<div class="b" style="left:364px;top:392px;width:1px;height:20px;background:linear-gradient(to bottom,rgba(255,255,255,0),rgba(255,255,255,.8));"></div>
<div class="b" style="left:402px;top:392px;width:1px;height:20px;background:linear-gradient(to bottom,#f2f2f2,#cfcfcf);"></div>
<div class="b" style="left:403px;top:392px;width:1px;height:20px;background:linear-gradient(to bottom,rgba(255,255,255,0),rgba(255,255,255,.8));"></div>
<div class="b" style="left:441px;top:392px;width:1px;height:20px;background:linear-gradient(to bottom,#f2f2f2,#cfcfcf);"></div>
<div class="b" style="left:442px;top:392px;width:1px;height:20px;background:linear-gradient(to bottom,rgba(255,255,255,0),rgba(255,255,255,.8));"></div>
<div class="b" style="left:480px;top:392px;width:1px;height:20px;background:linear-gradient(to bottom,#f2f2f2,#cfcfcf);"></div>
<div class="b" style="left:481px;top:392px;width:1px;height:20px;background:linear-gradient(to bottom,rgba(255,255,255,0),rgba(255,255,255,.8));"></div>
<div class="b" style="left:519px;top:392px;width:1px;height:20px;background:linear-gradient(to bottom,#f2f2f2,#cfcfcf);"></div>
<div class="b" style="left:520px;top:392px;width:1px;height:20px;background:linear-gradient(to bottom,rgba(255,255,255,0),rgba(255,255,255,.8));"></div>
<div class="b" style="left:558px;top:392px;width:1px;height:20px;background:linear-gradient(to bottom,#f2f2f2,#cfcfcf);"></div>
<div class="b" style="left:559px;top:392px;width:1px;height:20px;background:linear-gradient(to bottom,rgba(255,255,255,0),rgba(255,255,255,.8));"></div>
<div class="b" style="left:597px;top:392px;width:1px;height:20px;background:linear-gradient(to bottom,#f2f2f2,#cfcfcf);"></div>
<div class="b" style="left:598px;top:392px;width:1px;height:20px;background:linear-gradient(to bottom,rgba(255,255,255,0),rgba(255,255,255,.8));"></div>
<div class="b" style="left:636px;top:392px;width:1px;height:20px;background:linear-gradient(to bottom,#f2f2f2,#cfcfcf);"></div>
<div class="b" style="left:637px;top:392px;width:1px;height:20px;background:linear-gradient(to bottom,rgba(255,255,255,0),rgba(255,255,255,.8));"></div>
<div class="b" style="left:675px;top:392px;width:1px;height:20px;background:linear-gradient(to bottom,#f2f2f2,#cfcfcf);"></div>
<div class="b" style="left:676px;top:392px;width:1px;height:20px;background:linear-gradient(to bottom,rgba(255,255,255,0),rgba(255,255,255,.8));"></div>
<div class="b" style="left:714px;top:392px;width:1px;height:20px;background:linear-gradient(to bottom,#f2f2f2,#cfcfcf);"></div>
<div class="b" style="left:715px;top:392px;width:1px;height:20px;background:linear-gradient(to bottom,rgba(255,255,255,0),rgba(255,255,255,.8));"></div>
<div class="b" style="left:753px;top:392px;width:1px;height:20px;background:linear-gradient(to bottom,#f2f2f2,#cfcfcf);"></div>
<div class="b" style="left:754px;top:392px;width:1px;height:20px;background:linear-gradient(to bottom,rgba(255,255,255,0),rgba(255,255,255,.8));"></div>
<div class="b" style="left:792px;top:392px;width:1px;height:20px;background:linear-gradient(to bottom,#f2f2f2,#cfcfcf);"></div>
<div class="b" style="left:793px;top:392px;width:1px;height:20px;background:linear-gradient(to bottom,rgba(255,255,255,0),rgba(255,255,255,.8));"></div>
<div class="b" style="left:831px;top:392px;width:1px;height:20px;background:linear-gradient(to bottom,#f2f2f2,#cfcfcf);"></div>
<div class="b" style="left:832px;top:392px;width:1px;height:20px;background:linear-gradient(to bottom,rgba(255,255,255,0),rgba(255,255,255,.8));"></div>
<div class="b" style="left:870px;top:392px;width:1px;height:20px;background:linear-gradient(to bottom,#f2f2f2,#cfcfcf);"></div>
<div class="b" style="left:871px;top:392px;width:1px;height:20px;background:linear-gradient(to bottom,rgba(255,255,255,0),rgba(255,255,255,.8));"></div>
<div class="b" style="left:909px;top:392px;width:1px;height:20px;background:linear-gradient(to bottom,#f2f2f2,#cfcfcf);"></div>
<div class="b" style="left:910px;top:392px;width:1px;height:20px;background:linear-gradient(to bottom,rgba(255,255,255,0),rgba(255,255,255,.8));"></div>
<div class="b" style="left:948px;top:392px;width:1px;height:20px;background:linear-gradient(to bottom,#f2f2f2,#cfcfcf);"></div>
<div class="b" style="left:949px;top:392px;width:1px;height:20px;background:linear-gradient(to bottom,rgba(255,255,255,0),rgba(255,255,255,.8));"></div>
<div class="b" style="left:987px;top:392px;width:1px;height:20px;background:linear-gradient(to bottom,#f2f2f2,#cfcfcf);"></div>
<div class="b" style="left:988px;top:392px;width:1px;height:20px;background:linear-gradient(to bottom,rgba(255,255,255,0),rgba(255,255,255,.8));"></div>
<div class="b" style="left:1026px;top:392px;width:1px;height:20px;background:linear-gradient(to bottom,#f2f2f2,#cfcfcf);"></div>
<div class="b" style="left:1027px;top:392px;width:1px;height:20px;background:linear-gradient(to bottom,rgba(255,255,255,0),rgba(255,255,255,.8));"></div>
<div class="b" style="left:1065px;top:392px;width:1px;height:20px;background:linear-gradient(to bottom,#f2f2f2,#cfcfcf);"></div>
<div class="b" style="left:1066px;top:392px;width:1px;height:20px;background:linear-gradient(to bottom,rgba(255,255,255,0),rgba(255,255,255,.8));"></div>
<div class="b" style="left:1104px;top:392px;width:1px;height:20px;background:linear-gradient(to bottom,#f2f2f2,#cfcfcf);"></div>
<div class="b" style="left:1105px;top:392px;width:1px;height:20px;background:linear-gradient(to bottom,rgba(255,255,255,0),rgba(255,255,255,.8));"></div>
<div class="b" style="left:1143px;top:392px;width:1px;height:20px;background:linear-gradient(to bottom,#f2f2f2,#cfcfcf);"></div>
<div class="b" style="left:1144px;top:392px;width:1px;height:20px;background:linear-gradient(to bottom,rgba(255,255,255,0),rgba(255,255,255,.8));"></div>
<div class="b" style="left:1182px;top:392px;width:1px;height:20px;background:linear-gradient(to bottom,#f2f2f2,#cfcfcf);"></div>
<div class="b" style="left:1183px;top:392px;width:1px;height:20px;background:linear-gradient(to bottom,rgba(255,255,255,0),rgba(255,255,255,.8));"></div>
<div class="b" style="left:1221px;top:392px;width:1px;height:20px;background:linear-gradient(to bottom,#f2f2f2,#cfcfcf);"></div>
<div class="b" style="left:1222px;top:392px;width:1px;height:20px;background:linear-gradient(to bottom,rgba(255,255,255,0),rgba(255,255,255,.8));"></div>
<div class="b" style="left:1260px;top:392px;width:1px;height:20px;background:linear-gradient(to bottom,#f2f2f2,#cfcfcf);"></div>
<div class="b" style="left:1261px;top:392px;width:1px;height:20px;background:linear-gradient(to bottom,rgba(255,255,255,0),rgba(255,255,255,.8));"></div>
<div class="b" style="left:1299px;top:392px;width:1px;height:20px;background:linear-gradient(to bottom,#f2f2f2,#cfcfcf);"></div>
<div class="b" style="left:1300px;top:392px;width:1px;height:20px;background:linear-gradient(to bottom,rgba(255,255,255,0),rgba(255,255,255,.8));"></div>
<div class="b" style="left:1338px;top:392px;width:1px;height:20px;background:linear-gradient(to bottom,#f2f2f2,#cfcfcf);"></div>
<div class="b" style="left:1339px;top:392px;width:1px;height:20px;background:linear-gradient(to bottom,rgba(255,255,255,0),rgba(255,255,255,.8));"></div>
<div class="b" style="left:1377px;top:392px;width:1px;height:20px;background:linear-gradient(to bottom,#f2f2f2,#cfcfcf);"></div>
<div class="b" style="left:1378px;top:392px;width:1px;height:20px;background:linear-gradient(to bottom,rgba(255,255,255,0),rgba(255,255,255,.8));"></div>
<div class="b" style="left:1416px;top:392px;width:1px;height:20px;background:linear-gradient(to bottom,#f2f2f2,#cfcfcf);"></div>
<div class="b" style="left:1417px;top:392px;width:1px;height:20px;background:linear-gradient(to bottom,rgba(255,255,255,0),rgba(255,255,255,.8));"></div>
<div class="b" style="left:1455px;top:392px;width:1px;height:20px;background:linear-gradient(to bottom,#f2f2f2,#cfcfcf);"></div>
<div class="b" style="left:1456px;top:392px;width:1px;height:20px;background:linear-gradient(to bottom,rgba(255,255,255,0),rgba(255,255,255,.8));"></div>
<div class="b" style="left:1489px;top:392px;width:1px;height:20px;background:linear-gradient(to bottom,#f2f2f2,#cfcfcf);"></div>
<div class="b" style="left:1490px;top:392px;width:1px;height:20px;background:linear-gradient(to bottom,rgba(255,255,255,0),rgba(255,255,255,.8));"></div>
<div class="b" style="left:1522px;top:392px;width:1px;height:20px;background:linear-gradient(to bottom,#f2f2f2,#cfcfcf);"></div>
<div class="b" style="left:1523px;top:392px;width:1px;height:20px;background:linear-gradient(to bottom,rgba(255,255,255,0),rgba(255,255,255,.8));"></div>
<div class="b" style="left:1555px;top:392px;width:1px;height:20px;background:linear-gradient(to bottom,#f2f2f2,#cfcfcf);"></div>
<div class="b" style="left:1556px;top:392px;width:1px;height:20px;background:linear-gradient(to bottom,rgba(255,255,255,0),rgba(255,255,255,.8));"></div>
<div class="b" style="left:23px;top:412px;width:1533px;height:20px;background:#dddddd;"></div>
<div class="b" style="left:1px;top:412px;width:21px;height:20px;background:linear-gradient(to bottom,#f6f6f6,#dedede);"></div>
<span class="t" style="left:7.50px;top:416px;letter-spacing:-0.600px;">1</span>
<span class="t" style="left:26.20px;top:416px;letter-spacing:-0.427px;">January</span>
<span class="t" style="left:92.60px;top:416px;letter-spacing:-0.773px;">2014</span>
<div class="b" style="left:207px;top:412px;width:117px;height:20px;background:#97b5dd;"></div>
<div class="b" style="left:324px;top:412px;width:78px;height:20px;background:#7da5dc;"></div>
<div class="b" style="left:402px;top:412px;width:195px;height:20px;background:#97b5dd;"></div>
<div class="b" style="left:597px;top:412px;width:78px;height:20px;background:#7da5dc;"></div>
<div class="b" style="left:675px;top:412px;width:195px;height:20px;background:#97b5dd;"></div>
<div class="b" style="left:870px;top:412px;width:78px;height:20px;background:#7da5dc;"></div>
<div class="b" style="left:948px;top:412px;width:195px;height:20px;background:#97b5dd;"></div>
<div class="b" style="left:1143px;top:412px;width:78px;height:20px;background:#7da5dc;"></div>
<div class="b" style="left:1221px;top:412px;width:195px;height:20px;background:#97b5dd;"></div>
<span class="t" style="left:223.36px;top:416px;letter-spacing:-0.600px;">1</span>
<span class="t" style="left:262.36px;top:416px;letter-spacing:-0.600px;">2</span>
<span class="t" style="left:301.36px;top:416px;letter-spacing:-0.600px;">3</span>
<span class="t" style="left:340.36px;top:416px;letter-spacing:-0.600px;">4</span>
<span class="t" style="left:379.36px;top:416px;letter-spacing:-0.600px;">5</span>
<span class="t" style="left:418.36px;top:416px;letter-spacing:-0.600px;">6</span>
<span class="t" style="left:457.36px;top:416px;letter-spacing:-0.600px;">7</span>
<span class="t" style="left:496.36px;top:416px;letter-spacing:-0.600px;">8</span>
<span class="t" style="left:535.36px;top:416px;letter-spacing:-0.600px;">9</span>
<span class="t" style="left:571.33px;top:416px;letter-spacing:-0.600px;">10</span>
<span class="t" style="left:610.77px;top:416px;letter-spacing:-0.600px;">11</span>
<span class="t" style="left:649.33px;top:416px;letter-spacing:-0.600px;">12</span>
<span class="t" style="left:688.33px;top:416px;letter-spacing:-0.600px;">13</span>
<span class="t" style="left:727.33px;top:416px;letter-spacing:-0.600px;">14</span>
<span class="t" style="left:766.33px;top:416px;letter-spacing:-0.600px;">15</span>
<span class="t" style="left:805.33px;top:416px;letter-spacing:-0.600px;">16</span>
<span class="t" style="left:844.33px;top:416px;letter-spacing:-0.600px;">17</span>
<span class="t" style="left:883.33px;top:416px;letter-spacing:-0.600px;">18</span>
<span class="t" style="left:922.33px;top:416px;letter-spacing:-0.600px;">19</span>
<span class="t" style="left:961.33px;top:416px;letter-spacing:-0.600px;">20</span>
<span class="t" style="left:1000.33px;top:416px;letter-spacing:-0.600px;">21</span>
<span class="t" style="left:1039.33px;top:416px;letter-spacing:-0.600px;">22</span>
<span class="t" style="left:1078.33px;top:416px;letter-spacing:-0.600px;">23</span>
<span class="t" style="left:1117.33px;top:416px;letter-spacing:-0.600px;">24</span>
<span class="t" style="left:1156.33px;top:416px;letter-spacing:-0.600px;">25</span>
<span class="t" style="left:1195.33px;top:416px;letter-spacing:-0.600px;">26</span>
<span class="t" style="left:1234.33px;top:416px;letter-spacing:-0.600px;">27</span>
<span class="t" style="left:1273.33px;top:416px;letter-spacing:-0.600px;">28</span>
<span class="t" style="left:1312.33px;top:416px;letter-spacing:-0.600px;">29</span>
<span class="t" style="left:1351.33px;top:416px;letter-spacing:-0.600px;">30</span>
<span class="t" style="left:1390.33px;top:416px;letter-spacing:-0.600px;">31</span>
<div class="b" style="left:23px;top:432px;width:1533px;height:20px;background:#e8e8e8;"></div>
<div class="b" style="left:1px;top:432px;width:21px;height:20px;background:linear-gradient(to bottom,#ffffff 0,#f4f4f4 50%,#e6e6e6 100%);"></div>
<span class="t" style="left:7.50px;top:436px;letter-spacing:-0.600px;">2</span>
<span class="t" style="left:26.20px;top:436px;letter-spacing:-0.327px;">February</span>
<span class="t" style="left:92.60px;top:436px;letter-spacing:-0.773px;">2014</span>
<div class="b" style="left:324px;top:432px;width:78px;height:20px;background:#81abe6;"></div>
<div class="b" style="left:402px;top:432px;width:195px;height:20px;background:#9fbde8;"></div>
<div class="b" style="left:597px;top:432px;width:78px;height:20px;background:#81abe6;"></div>
<div class="b" style="left:675px;top:432px;width:195px;height:20px;background:#9fbde8;"></div>
<div class="b" style="left:870px;top:432px;width:78px;height:20px;background:#81abe6;"></div>
<div class="b" style="left:948px;top:432px;width:195px;height:20px;background:#9fbde8;"></div>
<div class="b" style="left:1143px;top:432px;width:78px;height:20px;background:#81abe6;"></div>
<div class="b" style="left:1221px;top:432px;width:195px;height:20px;background:#9fbde8;"></div>
<span class="t" style="left:340.36px;top:436px;letter-spacing:-0.600px;">1</span>
<span class="t" style="left:379.36px;top:436px;letter-spacing:-0.600px;">2</span>
<span class="t" style="left:418.36px;top:436px;letter-spacing:-0.600px;">3</span>
<span class="t" style="left:457.36px;top:436px;letter-spacing:-0.600px;">4</span>
<span class="t" style="left:496.36px;top:436px;letter-spacing:-0.600px;">5</span>
<span class="t" style="left:535.36px;top:436px;letter-spacing:-0.600px;">6</span>
<span class="t" style="left:574.36px;top:436px;letter-spacing:-0.600px;">7</span>
<span class="t" style="left:613.36px;top:436px;letter-spacing:-0.600px;">8</span>
<span class="t" style="left:652.36px;top:436px;letter-spacing:-0.600px;">9</span>
<span class="t" style="left:688.33px;top:436px;letter-spacing:-0.600px;">10</span>
<span class="t" style="left:727.77px;top:436px;letter-spacing:-0.600px;">11</span>
<span class="t" style="left:766.33px;top:436px;letter-spacing:-0.600px;">12</span>
<span class="t" style="left:805.33px;top:436px;letter-spacing:-0.600px;">13</span>
<span class="t" style="left:844.33px;top:436px;letter-spacing:-0.600px;">14</span>
<span class="t" style="left:883.33px;top:436px;letter-spacing:-0.600px;">15</span>
<span class="t" style="left:922.33px;top:436px;letter-spacing:-0.600px;">16</span>
<span class="t" style="left:961.33px;top:436px;letter-spacing:-0.600px;">17</span>
<span class="t" style="left:1000.33px;top:436px;letter-spacing:-0.600px;">18</span>
<span class="t" style="left:1039.33px;top:436px;letter-spacing:-0.600px;">19</span>
<span class="t" style="left:1078.33px;top:436px;letter-spacing:-0.600px;">20</span>
<span class="t" style="left:1117.33px;top:436px;letter-spacing:-0.600px;">21</span>
<span class="t" style="left:1156.33px;top:436px;letter-spacing:-0.600px;">22</span>
<span class="t" style="left:1195.33px;top:436px;letter-spacing:-0.600px;">23</span>
<span class="t" style="left:1234.33px;top:436px;letter-spacing:-0.600px;">24</span>
<span class="t" style="left:1273.33px;top:436px;letter-spacing:-0.600px;">25</span>
<span class="t" style="left:1312.33px;top:436px;letter-spacing:-0.600px;">26</span>
<span class="t" style="left:1351.33px;top:436px;letter-spacing:-0.600px;">27</span>
<span class="t" style="left:1390.33px;top:436px;letter-spacing:-0.600px;">28</span>
<div class="b" style="left:23px;top:452px;width:1533px;height:20px;background:#e8e8e8;"></div>
<div class="b" style="left:1px;top:452px;width:21px;height:20px;background:linear-gradient(to bottom,#ffffff 0,#f4f4f4 50%,#e6e6e6 100%);"></div>
<span class="t" style="left:7.50px;top:456px;letter-spacing:-0.600px;">3</span>
<span class="t" style="left:26.20px;top:456px;letter-spacing:-0.148px;">March</span>
<span class="t" style="left:92.60px;top:456px;letter-spacing:-0.773px;">2014</span>
<div class="b" style="left:324px;top:452px;width:78px;height:20px;background:#81abe6;"></div>
<div class="b" style="left:402px;top:452px;width:195px;height:20px;background:#9fbde8;"></div>
<div class="b" style="left:597px;top:452px;width:78px;height:20px;background:#81abe6;"></div>
<div class="b" style="left:675px;top:452px;width:195px;height:20px;background:#9fbde8;"></div>
<div class="b" style="left:870px;top:452px;width:78px;height:20px;background:#81abe6;"></div>
<div class="b" style="left:948px;top:452px;width:195px;height:20px;background:#9fbde8;"></div>
<div class="b" style="left:1143px;top:452px;width:78px;height:20px;background:#81abe6;"></div>
<div class="b" style="left:1221px;top:452px;width:156px;height:20px;background:#9fbde8;"></div>
<div class="b" style="left:1377px;top:452px;width:39px;height:20px;background:#dfe02c;"></div>
<div class="b" style="left:1416px;top:452px;width:73px;height:20px;background:#81abe6;"></div>
<div class="b" style="left:1489px;top:452px;width:33px;height:20px;background:#dfe02c;"></div>
<span class="t" style="left:340.36px;top:456px;letter-spacing:-0.600px;">1</span>
<span class="t" style="left:379.36px;top:456px;letter-spacing:-0.600px;">2</span>
<span class="t" style="left:418.36px;top:456px;letter-spacing:-0.600px;">3</span>
<span class="t" style="left:457.36px;top:456px;letter-spacing:-0.600px;">4</span>
<span class="t" style="left:496.36px;top:456px;letter-spacing:-0.600px;">5</span>
<span class="t" style="left:535.36px;top:456px;letter-spacing:-0.600px;">6</span>
<span class="t" style="left:574.36px;top:456px;letter-spacing:-0.600px;">7</span>
<span class="t" style="left:613.36px;top:456px;letter-spacing:-0.600px;">8</span>
<span class="t" style="left:652.36px;top:456px;letter-spacing:-0.600px;">9</span>
<span class="t" style="left:688.33px;top:456px;letter-spacing:-0.600px;">10</span>
<span class="t" style="left:727.77px;top:456px;letter-spacing:-0.600px;">11</span>
<span class="t" style="left:766.33px;top:456px;letter-spacing:-0.600px;">12</span>
<span class="t" style="left:805.33px;top:456px;letter-spacing:-0.600px;">13</span>
<span class="t" style="left:844.33px;top:456px;letter-spacing:-0.600px;">14</span>
<span class="t" style="left:883.33px;top:456px;letter-spacing:-0.600px;">15</span>
<span class="t" style="left:922.33px;top:456px;letter-spacing:-0.600px;">16</span>
<span class="t" style="left:961.33px;top:456px;letter-spacing:-0.600px;">17</span>
<span class="t" style="left:1000.33px;top:456px;letter-spacing:-0.600px;">18</span>
<span class="t" style="left:1039.33px;top:456px;letter-spacing:-0.600px;">19</span>
<span class="t" style="left:1078.33px;top:456px;letter-spacing:-0.600px;">20</span>
<span class="t" style="left:1117.33px;top:456px;letter-spacing:-0.600px;">21</span>
<span class="t" style="left:1156.33px;top:456px;letter-spacing:-0.600px;">22</span>
<span class="t" style="left:1195.33px;top:456px;letter-spacing:-0.600px;">23</span>
<span class="t" style="left:1234.33px;top:456px;letter-spacing:-0.600px;">24</span>
<span class="t" style="left:1273.33px;top:456px;letter-spacing:-0.600px;">25</span>
<span class="t" style="left:1312.33px;top:456px;letter-spacing:-0.600px;">26</span>
<span class="t" style="left:1351.33px;top:456px;letter-spacing:-0.600px;">27</span>
<span class="t" style="left:1390.33px;top:456px;letter-spacing:-0.600px;">28</span>
<span class="t" style="left:1429.33px;top:456px;letter-spacing:-0.600px;">29</span>
<span class="t" style="left:1465.83px;top:456px;letter-spacing:-0.600px;">30</span>
<span class="t" style="left:1499.33px;top:456px;letter-spacing:-0.600px;">31</span>
<div class="b" style="left:23px;top:472px;width:1533px;height:20px;background:#e8e8e8;"></div>
<div class="b" style="left:1px;top:472px;width:21px;height:20px;background:linear-gradient(to bottom,#ffffff 0,#f4f4f4 50%,#e6e6e6 100%);"></div>
<span class="t" style="left:7.50px;top:476px;letter-spacing:-0.600px;">4</span>
<span class="t" style="left:26.20px;top:476px;letter-spacing:0.159px;">April</span>
<span class="t" style="left:92.60px;top:476px;letter-spacing:-0.773px;">2014</span>
<div class="b" style="left:168px;top:472px;width:117px;height:20px;background:#86c83a;"></div>
<div class="b" style="left:285px;top:472px;width:39px;height:20px;background:#9fbde8;"></div>
<div class="b" style="left:324px;top:472px;width:78px;height:20px;background:#81abe6;"></div>
<div class="b" style="left:402px;top:472px;width:39px;height:20px;background:#9fbde8;"></div>
<div class="b" style="left:441px;top:472px;width:39px;height:20px;background:#df8b79;"></div>
<div class="b" style="left:480px;top:472px;width:117px;height:20px;background:#9fbde8;"></div>
<div class="b" style="left:597px;top:472px;width:78px;height:20px;background:#81abe6;"></div>
<div class="b" style="left:675px;top:472px;width:78px;height:20px;background:#9fbde8;"></div>
<div class="b" style="left:753px;top:472px;width:78px;height:20px;background:#dfe02c;"></div>
<div class="b" style="left:831px;top:472px;width:39px;height:20px;background:#9fbde8;"></div>
<div class="b" style="left:870px;top:472px;width:78px;height:20px;background:#81abe6;"></div>
<div class="b" style="left:948px;top:472px;width:195px;height:20px;background:#9fbde8;"></div>
<div class="b" style="left:1143px;top:472px;width:78px;height:20px;background:#81abe6;"></div>
<div class="b" style="left:1221px;top:472px;width:117px;height:20px;background:#9fbde8;"></div>
<span class="t" style="left:184.36px;top:476px;letter-spacing:-0.600px;">1</span>
<span class="t" style="left:223.36px;top:476px;letter-spacing:-0.600px;">2</span>
<span class="t" style="left:262.36px;top:476px;letter-spacing:-0.600px;">3</span>
<span class="t" style="left:301.36px;top:476px;letter-spacing:-0.600px;">4</span>
<span class="t" style="left:340.36px;top:476px;letter-spacing:-0.600px;">5</span>
<span class="t" style="left:379.36px;top:476px;letter-spacing:-0.600px;">6</span>
<span class="t" style="left:418.36px;top:476px;letter-spacing:-0.600px;">7</span>
<span class="t" style="left:457.36px;top:476px;letter-spacing:-0.600px;">8</span>
<span class="t" style="left:496.36px;top:476px;letter-spacing:-0.600px;">9</span>
<span class="t" style="left:532.33px;top:476px;letter-spacing:-0.600px;">10</span>
<span class="t" style="left:571.77px;top:476px;letter-spacing:-0.600px;">11</span>
<span class="t" style="left:610.33px;top:476px;letter-spacing:-0.600px;">12</span>
<span class="t" style="left:649.33px;top:476px;letter-spacing:-0.600px;">13</span>
<span class="t" style="left:688.33px;top:476px;letter-spacing:-0.600px;">14</span>
<span class="t" style="left:727.33px;top:476px;letter-spacing:-0.600px;">15</span>
<span class="t" style="left:766.33px;top:476px;letter-spacing:-0.600px;">16</span>
<span class="t" style="left:805.33px;top:476px;letter-spacing:-0.600px;">17</span>
<span class="t" style="left:844.33px;top:476px;letter-spacing:-0.600px;">18</span>
<span class="t" style="left:883.33px;top:476px;letter-spacing:-0.600px;">19</span>
<span class="t" style="left:922.33px;top:476px;letter-spacing:-0.600px;">20</span>
<span class="t" style="left:961.33px;top:476px;letter-spacing:-0.600px;">21</span>
<span class="t" style="left:1000.33px;top:476px;letter-spacing:-0.600px;">22</span>
<span class="t" style="left:1039.33px;top:476px;letter-spacing:-0.600px;">23</span>
<span class="t" style="left:1078.33px;top:476px;letter-spacing:-0.600px;">24</span>
<span class="t" style="left:1117.33px;top:476px;letter-spacing:-0.600px;">25</span>
<span class="t" style="left:1156.33px;top:476px;letter-spacing:-0.600px;">26</span>
<span class="t" style="left:1195.33px;top:476px;letter-spacing:-0.600px;">27</span>
<span class="t" style="left:1234.33px;top:476px;letter-spacing:-0.600px;">28</span>
<span class="t" style="left:1273.33px;top:476px;letter-spacing:-0.600px;">29</span>
<span class="t" style="left:1312.33px;top:476px;letter-spacing:-0.600px;">30</span>
<div class="b" style="left:23px;top:492px;width:1533px;height:20px;background:#e8e8e8;"></div>
<div class="b" style="left:1px;top:492px;width:21px;height:20px;background:linear-gradient(to bottom,#ffffff 0,#f4f4f4 50%,#e6e6e6 100%);"></div>
<span class="t" style="left:7.50px;top:496px;letter-spacing:-0.600px;">5</span>
<span class="t" style="left:26.20px;top:496px;letter-spacing:-0.223px;">May</span>
<span class="t" style="left:92.60px;top:496px;letter-spacing:-0.773px;">2014</span>
<div class="b" style="left:246px;top:492px;width:780px;height:20px;background:#dfe02c;"></div>
<div class="b" style="left:1026px;top:492px;width:117px;height:20px;background:#9fbde8;"></div>
<div class="b" style="left:1143px;top:492px;width:78px;height:20px;background:#81abe6;"></div>
<div class="b" style="left:1221px;top:492px;width:195px;height:20px;background:#9fbde8;"></div>
<div class="b" style="left:1416px;top:492px;width:39px;height:20px;background:#81abe6;"></div>
<span class="t" style="left:262.36px;top:496px;letter-spacing:-0.600px;">1</span>
<span class="t" style="left:301.36px;top:496px;letter-spacing:-0.600px;">2</span>
<span class="t" style="left:340.36px;top:496px;letter-spacing:-0.600px;">3</span>
<span class="t" style="left:379.36px;top:496px;letter-spacing:-0.600px;">4</span>
<span class="t" style="left:418.36px;top:496px;letter-spacing:-0.600px;">5</span>
<span class="t" style="left:457.36px;top:496px;letter-spacing:-0.600px;">6</span>
<span class="t" style="left:496.36px;top:496px;letter-spacing:-0.600px;">7</span>
<span class="t" style="left:535.36px;top:496px;letter-spacing:-0.600px;">8</span>
<span class="t" style="left:574.36px;top:496px;letter-spacing:-0.600px;">9</span>
<span class="t" style="left:610.33px;top:496px;letter-spacing:-0.600px;">10</span>
<span class="t" style="left:649.77px;top:496px;letter-spacing:-0.600px;">11</span>
<span class="t" style="left:688.33px;top:496px;letter-spacing:-0.600px;">12</span>
<span class="t" style="left:727.33px;top:496px;letter-spacing:-0.600px;">13</span>
<span class="t" style="left:766.33px;top:496px;letter-spacing:-0.600px;">14</span>
<span class="t" style="left:805.33px;top:496px;letter-spacing:-0.600px;">15</span>
<span class="t" style="left:844.33px;top:496px;letter-spacing:-0.600px;">16</span>
<span class="t" style="left:883.33px;top:496px;letter-spacing:-0.600px;">17</span>
<span class="t" style="left:922.33px;top:496px;letter-spacing:-0.600px;">18</span>
<span class="t" style="left:961.33px;top:496px;letter-spacing:-0.600px;">19</span>
<span class="t" style="left:1000.33px;top:496px;letter-spacing:-0.600px;">20</span>
<span class="t" style="left:1039.33px;top:496px;letter-spacing:-0.600px;">21</span>
<span class="t" style="left:1078.33px;top:496px;letter-spacing:-0.600px;">22</span>
<span class="t" style="left:1117.33px;top:496px;letter-spacing:-0.600px;">23</span>
<span class="t" style="left:1156.33px;top:496px;letter-spacing:-0.600px;">24</span>
<span class="t" style="left:1195.33px;top:496px;letter-spacing:-0.600px;">25</span>
<span class="t" style="left:1234.33px;top:496px;letter-spacing:-0.600px;">26</span>
<span class="t" style="left:1273.33px;top:496px;letter-spacing:-0.600px;">27</span>
<span class="t" style="left:1312.33px;top:496px;letter-spacing:-0.600px;">28</span>
<span class="t" style="left:1351.33px;top:496px;letter-spacing:-0.600px;">29</span>
<span class="t" style="left:1390.33px;top:496px;letter-spacing:-0.600px;">30</span>
<span class="t" style="left:1429.33px;top:496px;letter-spacing:-0.600px;">31</span>
<div class="b" style="left:23px;top:512px;width:1533px;height:20px;background:#e8e8e8;"></div>
<div class="b" style="left:1px;top:512px;width:21px;height:20px;background:linear-gradient(to bottom,#ffffff 0,#f4f4f4 50%,#e6e6e6 100%);"></div>
<span class="t" style="left:7.50px;top:516px;letter-spacing:-0.600px;">6</span>
<span class="t" style="left:26.20px;top:516px;letter-spacing:-0.480px;">June</span>
<span class="t" style="left:92.60px;top:516px;letter-spacing:-0.773px;">2014</span>
<div class="b" style="left:363px;top:512px;width:39px;height:20px;background:#81abe6;"></div>
<div class="b" style="left:402px;top:512px;width:195px;height:20px;background:#dfe02c;"></div>
<div class="b" style="left:597px;top:512px;width:78px;height:20px;background:#81abe6;"></div>
<div class="b" style="left:675px;top:512px;width:39px;height:20px;background:#9fbde8;"></div>
<div class="b" style="left:714px;top:512px;width:808px;height:20px;background:#c6c6c6;"></div>
<span class="t" style="left:379.36px;top:516px;letter-spacing:-0.600px;">1</span>
<span class="t" style="left:418.36px;top:516px;letter-spacing:-0.600px;">2</span>
<span class="t" style="left:457.36px;top:516px;letter-spacing:-0.600px;">3</span>
<span class="t" style="left:496.36px;top:516px;letter-spacing:-0.600px;">4</span>
<span class="t" style="left:535.36px;top:516px;letter-spacing:-0.600px;">5</span>
<span class="t" style="left:574.36px;top:516px;letter-spacing:-0.600px;">6</span>
<span class="t" style="left:613.36px;top:516px;letter-spacing:-0.600px;">7</span>
<span class="t" style="left:652.36px;top:516px;letter-spacing:-0.600px;">8</span>
<span class="t" style="left:691.36px;top:516px;letter-spacing:-0.600px;">9</span>
<span class="t" style="left:727.33px;top:516px;letter-spacing:-0.600px;">10</span>
<span class="t" style="left:766.77px;top:516px;letter-spacing:-0.600px;">11</span>
<span class="t" style="left:805.33px;top:516px;letter-spacing:-0.600px;">12</span>
<span class="t" style="left:844.33px;top:516px;letter-spacing:-0.600px;">13</span>
<span class="t" style="left:883.33px;top:516px;letter-spacing:-0.600px;">14</span>
<span class="t" style="left:922.33px;top:516px;letter-spacing:-0.600px;">15</span>
<span class="t" style="left:961.33px;top:516px;letter-spacing:-0.600px;">16</span>
<span class="t" style="left:1000.33px;top:516px;letter-spacing:-0.600px;">17</span>
<span class="t" style="left:1039.33px;top:516px;letter-spacing:-0.600px;">18</span>
<span class="t" style="left:1078.33px;top:516px;letter-spacing:-0.600px;">19</span>
<span class="t" style="left:1117.33px;top:516px;letter-spacing:-0.600px;">20</span>
<span class="t" style="left:1156.33px;top:516px;letter-spacing:-0.600px;">21</span>
<span class="t" style="left:1195.33px;top:516px;letter-spacing:-0.600px;">22</span>
<span class="t" style="left:1234.33px;top:516px;letter-spacing:-0.600px;">23</span>
<span class="t" style="left:1273.33px;top:516px;letter-spacing:-0.600px;">24</span>
<span class="t" style="left:1312.33px;top:516px;letter-spacing:-0.600px;">25</span>
<span class="t" style="left:1351.33px;top:516px;letter-spacing:-0.600px;">26</span>
<span class="t" style="left:1390.33px;top:516px;letter-spacing:-0.600px;">27</span>
<span class="t" style="left:1429.33px;top:516px;letter-spacing:-0.600px;">28</span>
<span class="t" style="left:1465.83px;top:516px;letter-spacing:-0.600px;">29</span>
<span class="t" style="left:1499.33px;top:516px;letter-spacing:-0.600px;">30</span>
<div class="b" style="left:23px;top:532px;width:1533px;height:20px;background:#e8e8e8;"></div>
<div class="b" style="left:1px;top:532px;width:21px;height:20px;background:linear-gradient(to bottom,#ffffff 0,#f4f4f4 50%,#e6e6e6 100%);"></div>
<span class="t" style="left:7.50px;top:536px;letter-spacing:-0.600px;">7</span>
<span class="t" style="left:26.20px;top:536px;letter-spacing:-0.240px;">July</span>
<span class="t" style="left:92.60px;top:536px;letter-spacing:-0.773px;">2014</span>
<div class="b" style="left:168px;top:532px;width:117px;height:20px;background:#c6c6c6;"></div>
<div class="b" style="left:285px;top:532px;width:39px;height:20px;background:#9fbde8;"></div>
<div class="b" style="left:324px;top:532px;width:78px;height:20px;background:#81abe6;"></div>
<div class="b" style="left:402px;top:532px;width:195px;height:20px;background:#9fbde8;"></div>
<div class="b" style="left:597px;top:532px;width:78px;height:20px;background:#81abe6;"></div>
<div class="b" style="left:675px;top:532px;width:195px;height:20px;background:#9fbde8;"></div>
<div class="b" style="left:870px;top:532px;width:78px;height:20px;background:#81abe6;"></div>
<div class="b" style="left:948px;top:532px;width:195px;height:20px;background:#9fbde8;"></div>
<div class="b" style="left:1143px;top:532px;width:78px;height:20px;background:#81abe6;"></div>
<div class="b" style="left:1221px;top:532px;width:156px;height:20px;background:#9fbde8;"></div>
<span class="t" style="left:184.36px;top:536px;letter-spacing:-0.600px;">1</span>
<span class="t" style="left:223.36px;top:536px;letter-spacing:-0.600px;">2</span>
<span class="t" style="left:262.36px;top:536px;letter-spacing:-0.600px;">3</span>
<span class="t" style="left:301.36px;top:536px;letter-spacing:-0.600px;">4</span>
<span class="t" style="left:340.36px;top:536px;letter-spacing:-0.600px;">5</span>
<span class="t" style="left:379.36px;top:536px;letter-spacing:-0.600px;">6</span>
<span class="t" style="left:418.36px;top:536px;letter-spacing:-0.600px;">7</span>
<span class="t" style="left:457.36px;top:536px;letter-spacing:-0.600px;">8</span>
<span class="t" style="left:496.36px;top:536px;letter-spacing:-0.600px;">9</span>
<span class="t" style="left:532.33px;top:536px;letter-spacing:-0.600px;">10</span>
<span class="t" style="left:571.77px;top:536px;letter-spacing:-0.600px;">11</span>
<span class="t" style="left:610.33px;top:536px;letter-spacing:-0.600px;">12</span>
<span class="t" style="left:649.33px;top:536px;letter-spacing:-0.600px;">13</span>
<span class="t" style="left:688.33px;top:536px;letter-spacing:-0.600px;">14</span>
<span class="t" style="left:727.33px;top:536px;letter-spacing:-0.600px;">15</span>
<span class="t" style="left:766.33px;top:536px;letter-spacing:-0.600px;">16</span>
<span class="t" style="left:805.33px;top:536px;letter-spacing:-0.600px;">17</span>
<span class="t" style="left:844.33px;top:536px;letter-spacing:-0.600px;">18</span>
<span class="t" style="left:883.33px;top:536px;letter-spacing:-0.600px;">19</span>
<span class="t" style="left:922.33px;top:536px;letter-spacing:-0.600px;">20</span>
<span class="t" style="left:961.33px;top:536px;letter-spacing:-0.600px;">21</span>
<span class="t" style="left:1000.33px;top:536px;letter-spacing:-0.600px;">22</span>
<span class="t" style="left:1039.33px;top:536px;letter-spacing:-0.600px;">23</span>
<span class="t" style="left:1078.33px;top:536px;letter-spacing:-0.600px;">24</span>
<span class="t" style="left:1117.33px;top:536px;letter-spacing:-0.600px;">25</span>
<span class="t" style="left:1156.33px;top:536px;letter-spacing:-0.600px;">26</span>
<span class="t" style="left:1195.33px;top:536px;letter-spacing:-0.600px;">27</span>
<span class="t" style="left:1234.33px;top:536px;letter-spacing:-0.600px;">28</span>
<span class="t" style="left:1273.33px;top:536px;letter-spacing:-0.600px;">29</span>
<span class="t" style="left:1312.33px;top:536px;letter-spacing:-0.600px;">30</span>
<span class="t" style="left:1351.33px;top:536px;letter-spacing:-0.600px;">31</span>
<div class="b" style="left:23px;top:552px;width:1533px;height:20px;background:#e8e8e8;"></div>
<div class="b" style="left:1px;top:552px;width:21px;height:20px;background:linear-gradient(to bottom,#ffffff 0,#f4f4f4 50%,#e6e6e6 100%);"></div>
<span class="t" style="left:7.50px;top:556px;letter-spacing:-0.600px;">8</span>
<span class="t" style="left:26.20px;top:556px;letter-spacing:-0.280px;">August</span>
<span class="t" style="left:92.60px;top:556px;letter-spacing:-0.773px;">2014</span>
<div class="b" style="left:285px;top:552px;width:39px;height:20px;background:#9fbde8;"></div>
<div class="b" style="left:324px;top:552px;width:78px;height:20px;background:#81abe6;"></div>
<div class="b" style="left:402px;top:552px;width:195px;height:20px;background:#9fbde8;"></div>
<div class="b" style="left:597px;top:552px;width:78px;height:20px;background:#81abe6;"></div>
<div class="b" style="left:675px;top:552px;width:195px;height:20px;background:#9fbde8;"></div>
<div class="b" style="left:870px;top:552px;width:78px;height:20px;background:#81abe6;"></div>
<div class="b" style="left:948px;top:552px;width:195px;height:20px;background:#9fbde8;"></div>
<div class="b" style="left:1143px;top:552px;width:78px;height:20px;background:#81abe6;"></div>
<div class="b" style="left:1221px;top:552px;width:195px;height:20px;background:#9fbde8;"></div>
<div class="b" style="left:1416px;top:552px;width:73px;height:20px;background:#81abe6;"></div>
<span class="t" style="left:301.36px;top:556px;letter-spacing:-0.600px;">1</span>
<span class="t" style="left:340.36px;top:556px;letter-spacing:-0.600px;">2</span>
<span class="t" style="left:379.36px;top:556px;letter-spacing:-0.600px;">3</span>
<span class="t" style="left:418.36px;top:556px;letter-spacing:-0.600px;">4</span>
<span class="t" style="left:457.36px;top:556px;letter-spacing:-0.600px;">5</span>
<span class="t" style="left:496.36px;top:556px;letter-spacing:-0.600px;">6</span>
<span class="t" style="left:535.36px;top:556px;letter-spacing:-0.600px;">7</span>
<span class="t" style="left:574.36px;top:556px;letter-spacing:-0.600px;">8</span>
<span class="t" style="left:613.36px;top:556px;letter-spacing:-0.600px;">9</span>
<span class="t" style="left:649.33px;top:556px;letter-spacing:-0.600px;">10</span>
<span class="t" style="left:688.77px;top:556px;letter-spacing:-0.600px;">11</span>
<span class="t" style="left:727.33px;top:556px;letter-spacing:-0.600px;">12</span>
<span class="t" style="left:766.33px;top:556px;letter-spacing:-0.600px;">13</span>
<span class="t" style="left:805.33px;top:556px;letter-spacing:-0.600px;">14</span>
<span class="t" style="left:844.33px;top:556px;letter-spacing:-0.600px;">15</span>
<span class="t" style="left:883.33px;top:556px;letter-spacing:-0.600px;">16</span>
<span class="t" style="left:922.33px;top:556px;letter-spacing:-0.600px;">17</span>
<span class="t" style="left:961.33px;top:556px;letter-spacing:-0.600px;">18</span>
<span class="t" style="left:1000.33px;top:556px;letter-spacing:-0.600px;">19</span>
<span class="t" style="left:1039.33px;top:556px;letter-spacing:-0.600px;">20</span>
<span class="t" style="left:1078.33px;top:556px;letter-spacing:-0.600px;">21</span>
<span class="t" style="left:1117.33px;top:556px;letter-spacing:-0.600px;">22</span>
<span class="t" style="left:1156.33px;top:556px;letter-spacing:-0.600px;">23</span>
<span class="t" style="left:1195.33px;top:556px;letter-spacing:-0.600px;">24</span>
<span class="t" style="left:1234.33px;top:556px;letter-spacing:-0.600px;">25</span>
<span class="t" style="left:1273.33px;top:556px;letter-spacing:-0.600px;">26</span>
<span class="t" style="left:1312.33px;top:556px;letter-spacing:-0.600px;">27</span>
<span class="t" style="left:1351.33px;top:556px;letter-spacing:-0.600px;">28</span>
<span class="t" style="left:1390.33px;top:556px;letter-spacing:-0.600px;">29</span>
<span class="t" style="left:1429.33px;top:556px;letter-spacing:-0.600px;">30</span>
<span class="t" style="left:1465.83px;top:556px;letter-spacing:-0.600px;">31</span>
<div class="b" style="left:23px;top:572px;width:1533px;height:20px;background:#e8e8e8;"></div>
<div class="b" style="left:1px;top:572px;width:21px;height:20px;background:linear-gradient(to bottom,#ffffff 0,#f4f4f4 50%,#e6e6e6 100%);"></div>
<span class="t" style="left:7.50px;top:576px;letter-spacing:-0.600px;">9</span>
<span class="t" style="left:26.20px;top:576px;letter-spacing:-0.294px;">September</span>
<span class="t" style="left:92.60px;top:576px;letter-spacing:-0.773px;">2014</span>
<div class="b" style="left:128px;top:572px;width:196px;height:20px;background:#9fbde8;"></div>
<div class="b" style="left:324px;top:572px;width:78px;height:20px;background:#81abe6;"></div>
<div class="b" style="left:402px;top:572px;width:195px;height:20px;background:#9fbde8;"></div>
<div class="b" style="left:597px;top:572px;width:78px;height:20px;background:#81abe6;"></div>
<div class="b" style="left:675px;top:572px;width:195px;height:20px;background:#9fbde8;"></div>
<div class="b" style="left:870px;top:572px;width:78px;height:20px;background:#81abe6;"></div>
<div class="b" style="left:948px;top:572px;width:195px;height:20px;background:#9fbde8;"></div>
<div class="b" style="left:1143px;top:572px;width:78px;height:20px;background:#81abe6;"></div>
<div class="b" style="left:1221px;top:572px;width:78px;height:20px;background:#9fbde8;"></div>
<span class="t" style="left:144.86px;top:576px;letter-spacing:-0.600px;">1</span>
<span class="t" style="left:184.36px;top:576px;letter-spacing:-0.600px;">2</span>
<span class="t" style="left:223.36px;top:576px;letter-spacing:-0.600px;">3</span>
<span class="t" style="left:262.36px;top:576px;letter-spacing:-0.600px;">4</span>
<span class="t" style="left:301.36px;top:576px;letter-spacing:-0.600px;">5</span>
<span class="t" style="left:340.36px;top:576px;letter-spacing:-0.600px;">6</span>
<span class="t" style="left:379.36px;top:576px;letter-spacing:-0.600px;">7</span>
<span class="t" style="left:418.36px;top:576px;letter-spacing:-0.600px;">8</span>
<span class="t" style="left:457.36px;top:576px;letter-spacing:-0.600px;">9</span>
<span class="t" style="left:493.33px;top:576px;letter-spacing:-0.600px;">10</span>
<span class="t" style="left:532.77px;top:576px;letter-spacing:-0.600px;">11</span>
<span class="t" style="left:571.33px;top:576px;letter-spacing:-0.600px;">12</span>
<span class="t" style="left:610.33px;top:576px;letter-spacing:-0.600px;">13</span>
<span class="t" style="left:649.33px;top:576px;letter-spacing:-0.600px;">14</span>
<span class="t" style="left:688.33px;top:576px;letter-spacing:-0.600px;">15</span>
<span class="t" style="left:727.33px;top:576px;letter-spacing:-0.600px;">16</span>
<span class="t" style="left:766.33px;top:576px;letter-spacing:-0.600px;">17</span>
<span class="t" style="left:805.33px;top:576px;letter-spacing:-0.600px;">18</span>
<span class="t" style="left:844.33px;top:576px;letter-spacing:-0.600px;">19</span>
<span class="t" style="left:883.33px;top:576px;letter-spacing:-0.600px;">20</span>
<span class="t" style="left:922.33px;top:576px;letter-spacing:-0.600px;">21</span>
<span class="t" style="left:961.33px;top:576px;letter-spacing:-0.600px;">22</span>
<span class="t" style="left:1000.33px;top:576px;letter-spacing:-0.600px;">23</span>
<span class="t" style="left:1039.33px;top:576px;letter-spacing:-0.600px;">24</span>
<span class="t" style="left:1078.33px;top:576px;letter-spacing:-0.600px;">25</span>
<span class="t" style="left:1117.33px;top:576px;letter-spacing:-0.600px;">26</span>
<span class="t" style="left:1156.33px;top:576px;letter-spacing:-0.600px;">27</span>
<span class="t" style="left:1195.33px;top:576px;letter-spacing:-0.600px;">28</span>
<span class="t" style="left:1234.33px;top:576px;letter-spacing:-0.600px;">29</span>
<span class="t" style="left:1273.33px;top:576px;letter-spacing:-0.600px;">30</span>
<div class="b" style="left:23px;top:592px;width:1533px;height:20px;background:#e8e8e8;"></div>
<div class="b" style="left:1px;top:592px;width:21px;height:20px;background:linear-gradient(to bottom,#ffffff 0,#f4f4f4 50%,#e6e6e6 100%);"></div>
<span class="t" style="left:4.50px;top:596px;letter-spacing:-0.600px;">10</span>
<span class="t" style="left:26.20px;top:596px;letter-spacing:-0.041px;">October</span>
<span class="t" style="left:92.60px;top:596px;letter-spacing:-0.773px;">2014</span>
<div class="b" style="left:207px;top:592px;width:117px;height:20px;background:#9fbde8;"></div>
<div class="b" style="left:324px;top:592px;width:78px;height:20px;background:#81abe6;"></div>
<div class="b" style="left:402px;top:592px;width:195px;height:20px;background:#9fbde8;"></div>
<div class="b" style="left:597px;top:592px;width:78px;height:20px;background:#81abe6;"></div>
<div class="b" style="left:675px;top:592px;width:195px;height:20px;background:#9fbde8;"></div>
<div class="b" style="left:870px;top:592px;width:78px;height:20px;background:#81abe6;"></div>
<div class="b" style="left:948px;top:592px;width:195px;height:20px;background:#9fbde8;"></div>
<div class="b" style="left:1143px;top:592px;width:78px;height:20px;background:#81abe6;"></div>
<div class="b" style="left:1221px;top:592px;width:195px;height:20px;background:#9fbde8;"></div>
<span class="t" style="left:223.36px;top:596px;letter-spacing:-0.600px;">1</span>
<span class="t" style="left:262.36px;top:596px;letter-spacing:-0.600px;">2</span>
<span class="t" style="left:301.36px;top:596px;letter-spacing:-0.600px;">3</span>
<span class="t" style="left:340.36px;top:596px;letter-spacing:-0.600px;">4</span>
<span class="t" style="left:379.36px;top:596px;letter-spacing:-0.600px;">5</span>
<span class="t" style="left:418.36px;top:596px;letter-spacing:-0.600px;">6</span>
<span class="t" style="left:457.36px;top:596px;letter-spacing:-0.600px;">7</span>
<span class="t" style="left:496.36px;top:596px;letter-spacing:-0.600px;">8</span>
<span class="t" style="left:535.36px;top:596px;letter-spacing:-0.600px;">9</span>
<span class="t" style="left:571.33px;top:596px;letter-spacing:-0.600px;">10</span>
<span class="t" style="left:610.77px;top:596px;letter-spacing:-0.600px;">11</span>
<span class="t" style="left:649.33px;top:596px;letter-spacing:-0.600px;">12</span>
<span class="t" style="left:688.33px;top:596px;letter-spacing:-0.600px;">13</span>
<span class="t" style="left:727.33px;top:596px;letter-spacing:-0.600px;">14</span>
<span class="t" style="left:766.33px;top:596px;letter-spacing:-0.600px;">15</span>
<span class="t" style="left:805.33px;top:596px;letter-spacing:-0.600px;">16</span>
<span class="t" style="left:844.33px;top:596px;letter-spacing:-0.600px;">17</span>
<span class="t" style="left:883.33px;top:596px;letter-spacing:-0.600px;">18</span>
<span class="t" style="left:922.33px;top:596px;letter-spacing:-0.600px;">19</span>
<span class="t" style="left:961.33px;top:596px;letter-spacing:-0.600px;">20</span>
<span class="t" style="left:1000.33px;top:596px;letter-spacing:-0.600px;">21</span>
<span class="t" style="left:1039.33px;top:596px;letter-spacing:-0.600px;">22</span>
<span class="t" style="left:1078.33px;top:596px;letter-spacing:-0.600px;">23</span>
<span class="t" style="left:1117.33px;top:596px;letter-spacing:-0.600px;">24</span>
<span class="t" style="left:1156.33px;top:596px;letter-spacing:-0.600px;">25</span>
<span class="t" style="left:1195.33px;top:596px;letter-spacing:-0.600px;">26</span>
<span class="t" style="left:1234.33px;top:596px;letter-spacing:-0.600px;">27</span>
<span class="t" style="left:1273.33px;top:596px;letter-spacing:-0.600px;">28</span>
<span class="t" style="left:1312.33px;top:596px;letter-spacing:-0.600px;">29</span>
<span class="t" style="left:1351.33px;top:596px;letter-spacing:-0.600px;">30</span>
<span class="t" style="left:1390.33px;top:596px;letter-spacing:-0.600px;">31</span>
<div class="b" style="left:23px;top:612px;width:1533px;height:20px;background:#e8e8e8;"></div>
<div class="b" style="left:1px;top:612px;width:21px;height:20px;background:linear-gradient(to bottom,#ffffff 0,#f4f4f4 50%,#e6e6e6 100%);"></div>
<span class="t" style="left:4.50px;top:616px;letter-spacing:-0.600px;">11</span>
<span class="t" style="left:26.20px;top:616px;letter-spacing:0.006px;">November</span>
<span class="t" style="left:92.60px;top:616px;letter-spacing:-0.773px;">2014</span>
<div class="b" style="left:324px;top:612px;width:78px;height:20px;background:#81abe6;"></div>
<div class="b" style="left:402px;top:612px;width:195px;height:20px;background:#9fbde8;"></div>
<div class="b" style="left:597px;top:612px;width:78px;height:20px;background:#81abe6;"></div>
<div class="b" style="left:675px;top:612px;width:195px;height:20px;background:#9fbde8;"></div>
<div class="b" style="left:870px;top:612px;width:78px;height:20px;background:#81abe6;"></div>
<div class="b" style="left:948px;top:612px;width:195px;height:20px;background:#9fbde8;"></div>
<div class="b" style="left:1143px;top:612px;width:78px;height:20px;background:#81abe6;"></div>
<div class="b" style="left:1221px;top:612px;width:195px;height:20px;background:#9fbde8;"></div>
<div class="b" style="left:1416px;top:612px;width:73px;height:20px;background:#81abe6;"></div>
<span class="t" style="left:340.36px;top:616px;letter-spacing:-0.600px;">1</span>
<span class="t" style="left:379.36px;top:616px;letter-spacing:-0.600px;">2</span>
<span class="t" style="left:418.36px;top:616px;letter-spacing:-0.600px;">3</span>
<span class="t" style="left:457.36px;top:616px;letter-spacing:-0.600px;">4</span>
<span class="t" style="left:496.36px;top:616px;letter-spacing:-0.600px;">5</span>
<span class="t" style="left:535.36px;top:616px;letter-spacing:-0.600px;">6</span>
<span class="t" style="left:574.36px;top:616px;letter-spacing:-0.600px;">7</span>
<span class="t" style="left:613.36px;top:616px;letter-spacing:-0.600px;">8</span>
<span class="t" style="left:652.36px;top:616px;letter-spacing:-0.600px;">9</span>
<span class="t" style="left:688.33px;top:616px;letter-spacing:-0.600px;">10</span>
<span class="t" style="left:727.77px;top:616px;letter-spacing:-0.600px;">11</span>
<span class="t" style="left:766.33px;top:616px;letter-spacing:-0.600px;">12</span>
<span class="t" style="left:805.33px;top:616px;letter-spacing:-0.600px;">13</span>
<span class="t" style="left:844.33px;top:616px;letter-spacing:-0.600px;">14</span>
<span class="t" style="left:883.33px;top:616px;letter-spacing:-0.600px;">15</span>
<span class="t" style="left:922.33px;top:616px;letter-spacing:-0.600px;">16</span>
<span class="t" style="left:961.33px;top:616px;letter-spacing:-0.600px;">17</span>
<span class="t" style="left:1000.33px;top:616px;letter-spacing:-0.600px;">18</span>
<span class="t" style="left:1039.33px;top:616px;letter-spacing:-0.600px;">19</span>
<span class="t" style="left:1078.33px;top:616px;letter-spacing:-0.600px;">20</span>
<span class="t" style="left:1117.33px;top:616px;letter-spacing:-0.600px;">21</span>
<span class="t" style="left:1156.33px;top:616px;letter-spacing:-0.600px;">22</span>
<span class="t" style="left:1195.33px;top:616px;letter-spacing:-0.600px;">23</span>
<span class="t" style="left:1234.33px;top:616px;letter-spacing:-0.600px;">24</span>
<span class="t" style="left:1273.33px;top:616px;letter-spacing:-0.600px;">25</span>
<span class="t" style="left:1312.33px;top:616px;letter-spacing:-0.600px;">26</span>
<span class="t" style="left:1351.33px;top:616px;letter-spacing:-0.600px;">27</span>
<span class="t" style="left:1390.33px;top:616px;letter-spacing:-0.600px;">28</span>
<span class="t" style="left:1429.33px;top:616px;letter-spacing:-0.600px;">29</span>
<span class="t" style="left:1465.83px;top:616px;letter-spacing:-0.600px;">30</span>
<div class="b" style="left:23px;top:632px;width:1533px;height:20px;background:#e8e8e8;"></div>
<div class="b" style="left:1px;top:632px;width:21px;height:20px;background:linear-gradient(to bottom,#ffffff 0,#f4f4f4 50%,#e6e6e6 100%);"></div>
<span class="t" style="left:4.50px;top:636px;letter-spacing:-0.600px;">12</span>
<span class="t" style="left:26.20px;top:636px;letter-spacing:-0.232px;">December</span>
<span class="t" style="left:92.60px;top:636px;letter-spacing:-0.773px;">2014</span>
<div class="b" style="left:128px;top:632px;width:196px;height:20px;background:#9fbde8;"></div>
<div class="b" style="left:324px;top:632px;width:78px;height:20px;background:#81abe6;"></div>
<div class="b" style="left:402px;top:632px;width:195px;height:20px;background:#9fbde8;"></div>
<div class="b" style="left:597px;top:632px;width:78px;height:20px;background:#81abe6;"></div>
<div class="b" style="left:675px;top:632px;width:195px;height:20px;background:#9fbde8;"></div>
<div class="b" style="left:870px;top:632px;width:78px;height:20px;background:#81abe6;"></div>
<div class="b" style="left:948px;top:632px;width:195px;height:20px;background:#9fbde8;"></div>
<div class="b" style="left:1143px;top:632px;width:78px;height:20px;background:#81abe6;"></div>
<div class="b" style="left:1221px;top:632px;width:117px;height:20px;background:#9fbde8;"></div>
<span class="t" style="left:144.86px;top:636px;letter-spacing:-0.600px;">1</span>
<span class="t" style="left:184.36px;top:636px;letter-spacing:-0.600px;">2</span>
<span class="t" style="left:223.36px;top:636px;letter-spacing:-0.600px;">3</span>
<span class="t" style="left:262.36px;top:636px;letter-spacing:-0.600px;">4</span>
<span class="t" style="left:301.36px;top:636px;letter-spacing:-0.600px;">5</span>
<span class="t" style="left:340.36px;top:636px;letter-spacing:-0.600px;">6</span>
<span class="t" style="left:379.36px;top:636px;letter-spacing:-0.600px;">7</span>
<span class="t" style="left:418.36px;top:636px;letter-spacing:-0.600px;">8</span>
<span class="t" style="left:457.36px;top:636px;letter-spacing:-0.600px;">9</span>
<span class="t" style="left:493.33px;top:636px;letter-spacing:-0.600px;">10</span>
<span class="t" style="left:532.77px;top:636px;letter-spacing:-0.600px;">11</span>
<span class="t" style="left:571.33px;top:636px;letter-spacing:-0.600px;">12</span>
<span class="t" style="left:610.33px;top:636px;letter-spacing:-0.600px;">13</span>
<span class="t" style="left:649.33px;top:636px;letter-spacing:-0.600px;">14</span>
<span class="t" style="left:688.33px;top:636px;letter-spacing:-0.600px;">15</span>
<span class="t" style="left:727.33px;top:636px;letter-spacing:-0.600px;">16</span>
<span class="t" style="left:766.33px;top:636px;letter-spacing:-0.600px;">17</span>
<span class="t" style="left:805.33px;top:636px;letter-spacing:-0.600px;">18</span>
<span class="t" style="left:844.33px;top:636px;letter-spacing:-0.600px;">19</span>
<span class="t" style="left:883.33px;top:636px;letter-spacing:-0.600px;">20</span>
<span class="t" style="left:922.33px;top:636px;letter-spacing:-0.600px;">21</span>
<span class="t" style="left:961.33px;top:636px;letter-spacing:-0.600px;">22</span>
<span class="t" style="left:1000.33px;top:636px;letter-spacing:-0.600px;">23</span>
<span class="t" style="left:1039.33px;top:636px;letter-spacing:-0.600px;">24</span>
<span class="t" style="left:1078.33px;top:636px;letter-spacing:-0.600px;">25</span>
<span class="t" style="left:1117.33px;top:636px;letter-spacing:-0.600px;">26</span>
<span class="t" style="left:1156.33px;top:636px;letter-spacing:-0.600px;">27</span>
<span class="t" style="left:1195.33px;top:636px;letter-spacing:-0.600px;">28</span>
<span class="t" style="left:1234.33px;top:636px;letter-spacing:-0.600px;">29</span>
<span class="t" style="left:1273.33px;top:636px;letter-spacing:-0.600px;">30</span>
<span class="t" style="left:1312.33px;top:636px;letter-spacing:-0.600px;">31</span>
<div class="b" style="left:22px;top:412px;width:1px;height:241px;background:rgba(0,0,0,0.17);"></div>
<div class="b" style="left:89px;top:412px;width:1px;height:241px;background:rgba(0,0,0,0.10);"></div>
<div class="b" style="left:128px;top:412px;width:1px;height:241px;background:rgba(0,0,0,0.10);"></div>
<div class="b" style="left:168px;top:412px;width:1px;height:241px;background:rgba(0,0,0,0.10);"></div>
<div class="b" style="left:207px;top:412px;width:1px;height:241px;background:rgba(0,0,0,0.10);"></div>
<div class="b" style="left:246px;top:412px;width:1px;height:241px;background:rgba(0,0,0,0.10);"></div>
<div class="b" style="left:285px;top:412px;width:1px;height:241px;background:rgba(0,0,0,0.10);"></div>
<div class="b" style="left:324px;top:412px;width:1px;height:241px;background:rgba(0,0,0,0.10);"></div>
<div class="b" style="left:363px;top:412px;width:1px;height:241px;background:rgba(0,0,0,0.10);"></div>
<div class="b" style="left:402px;top:412px;width:1px;height:241px;background:rgba(0,0,0,0.10);"></div>
<div class="b" style="left:441px;top:412px;width:1px;height:241px;background:rgba(0,0,0,0.10);"></div>
<div class="b" style="left:480px;top:412px;width:1px;height:241px;background:rgba(0,0,0,0.10);"></div>
<div class="b" style="left:519px;top:412px;width:1px;height:241px;background:rgba(0,0,0,0.10);"></div>
<div class="b" style="left:558px;top:412px;width:1px;height:241px;background:rgba(0,0,0,0.10);"></div>
<div class="b" style="left:597px;top:412px;width:1px;height:241px;background:rgba(0,0,0,0.10);"></div>
<div class="b" style="left:636px;top:412px;width:1px;height:241px;background:rgba(0,0,0,0.10);"></div>
<div class="b" style="left:675px;top:412px;width:1px;height:241px;background:rgba(0,0,0,0.10);"></div>
<div class="b" style="left:714px;top:412px;width:1px;height:241px;background:rgba(0,0,0,0.10);"></div>
<div class="b" style="left:753px;top:412px;width:1px;height:241px;background:rgba(0,0,0,0.10);"></div>
<div class="b" style="left:792px;top:412px;width:1px;height:241px;background:rgba(0,0,0,0.10);"></div>
<div class="b" style="left:831px;top:412px;width:1px;height:241px;background:rgba(0,0,0,0.10);"></div>
<div class="b" style="left:870px;top:412px;width:1px;height:241px;background:rgba(0,0,0,0.10);"></div>
<div class="b" style="left:909px;top:412px;width:1px;height:241px;background:rgba(0,0,0,0.10);"></div>
<div class="b" style="left:948px;top:412px;width:1px;height:241px;background:rgba(0,0,0,0.10);"></div>
<div class="b" style="left:987px;top:412px;width:1px;height:241px;background:rgba(0,0,0,0.10);"></div>
<div class="b" style="left:1026px;top:412px;width:1px;height:241px;background:rgba(0,0,0,0.10);"></div>
<div class="b" style="left:1065px;top:412px;width:1px;height:241px;background:rgba(0,0,0,0.10);"></div>
<div class="b" style="left:1104px;top:412px;width:1px;height:241px;background:rgba(0,0,0,0.10);"></div>
<div class="b" style="left:1143px;top:412px;width:1px;height:241px;background:rgba(0,0,0,0.10);"></div>
<div class="b" style="left:1182px;top:412px;width:1px;height:241px;background:rgba(0,0,0,0.10);"></div>
<div class="b" style="left:1221px;top:412px;width:1px;height:241px;background:rgba(0,0,0,0.10);"></div>
<div class="b" style="left:1260px;top:412px;width:1px;height:241px;background:rgba(0,0,0,0.10);"></div>
<div class="b" style="left:1299px;top:412px;width:1px;height:241px;background:rgba(0,0,0,0.10);"></div>
<div class="b" style="left:1338px;top:412px;width:1px;height:241px;background:rgba(0,0,0,0.10);"></div>
<div class="b" style="left:1377px;top:412px;width:1px;height:241px;background:rgba(0,0,0,0.10);"></div>
<div class="b" style="left:1416px;top:412px;width:1px;height:241px;background:rgba(0,0,0,0.10);"></div>
<div class="b" style="left:1455px;top:412px;width:1px;height:241px;background:rgba(0,0,0,0.10);"></div>
<div class="b" style="left:1489px;top:412px;width:1px;height:241px;background:rgba(0,0,0,0.10);"></div>
<div class="b" style="left:1522px;top:412px;width:1px;height:241px;background:rgba(0,0,0,0.10);"></div>
<div class="b" style="left:1555px;top:412px;width:1px;height:241px;background:rgba(0,0,0,0.10);"></div>
<div class="b" style="left:1px;top:412px;width:1555px;height:1px;background:rgba(0,0,0,0.09);"></div>
<div class="b" style="left:1px;top:432px;width:1555px;height:1px;background:rgba(0,0,0,0.09);"></div>
<div class="b" style="left:1px;top:452px;width:1555px;height:1px;background:rgba(0,0,0,0.09);"></div>
<div class="b" style="left:1px;top:472px;width:1555px;height:1px;background:rgba(0,0,0,0.09);"></div>
<div class="b" style="left:1px;top:492px;width:1555px;height:1px;background:rgba(0,0,0,0.09);"></div>
<div class="b" style="left:1px;top:512px;width:1555px;height:1px;background:rgba(0,0,0,0.09);"></div>
<div class="b" style="left:1px;top:532px;width:1555px;height:1px;background:rgba(0,0,0,0.09);"></div>
<div class="b" style="left:1px;top:552px;width:1555px;height:1px;background:rgba(0,0,0,0.09);"></div>
<div class="b" style="left:1px;top:572px;width:1555px;height:1px;background:rgba(0,0,0,0.09);"></div>
<div class="b" style="left:1px;top:592px;width:1555px;height:1px;background:rgba(0,0,0,0.09);"></div>
<div class="b" style="left:1px;top:612px;width:1555px;height:1px;background:rgba(0,0,0,0.09);"></div>
<div class="b" style="left:1px;top:632px;width:1555px;height:1px;background:rgba(0,0,0,0.09);"></div>
<div class="b" style="left:1px;top:652px;width:1555px;height:1px;background:rgba(0,0,0,0.09);"></div>
<div class="b" style="left:22px;top:653px;width:1px;height:3px;background:#d4d4d4;"></div>
<div class="b" style="left:1px;top:653px;width:21px;height:3px;background:#f4f4f4;"></div>
<div class="b" style="left:23px;top:413px;width:64px;height:17px;border:1px solid #b4b4b4;box-shadow:inset 0 0 0 1px #c9c9c9;"></div>
</body></html>
